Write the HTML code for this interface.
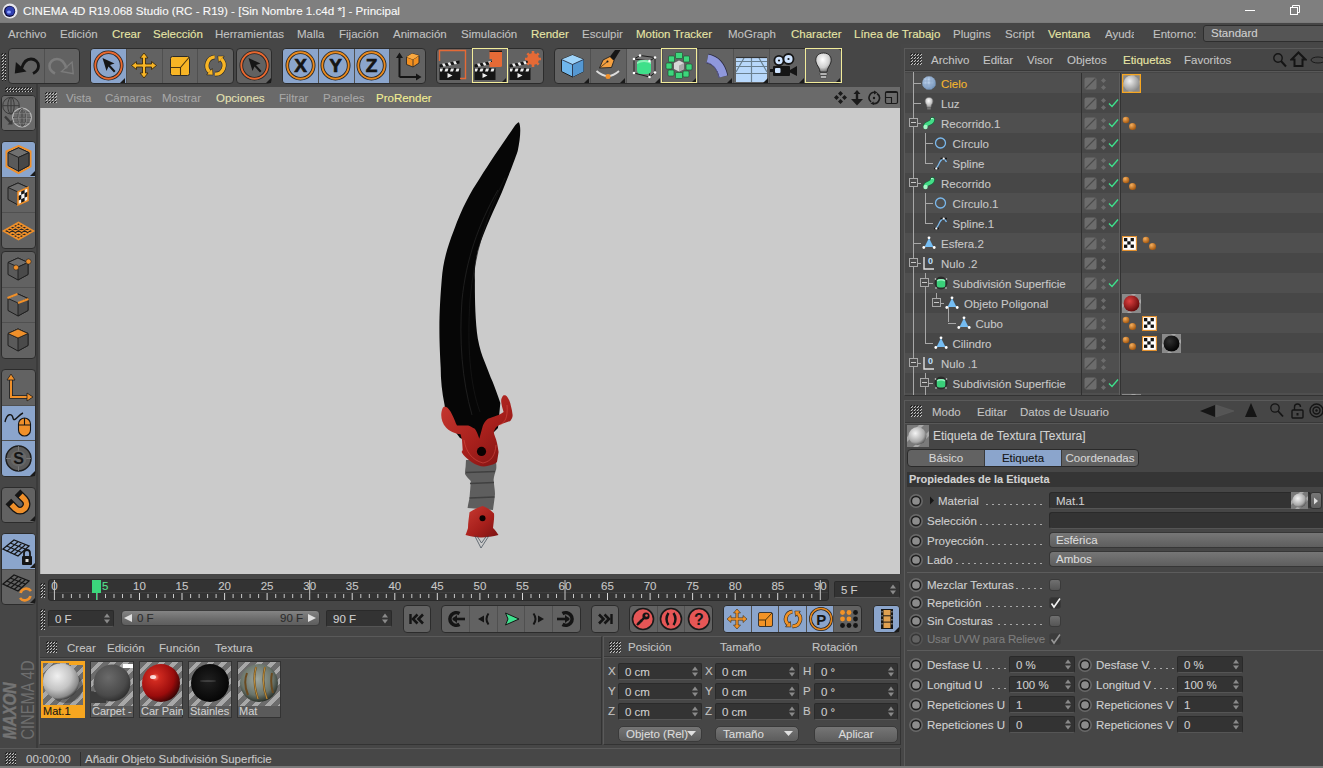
<!DOCTYPE html><html><head><meta charset="utf-8"><style>
*{margin:0;padding:0;box-sizing:border-box}
html,body{width:1323px;height:768px;overflow:hidden;background:#464646;font-family:"Liberation Sans",sans-serif;position:relative}
div,span,svg{position:absolute}
.t{white-space:nowrap;font-size:11.5px;color:#c2c2c2;line-height:14px;-webkit-text-stroke:0.1px currentColor}
.y{color:#e8e6a6}
</style></head><body><div style="left:0px;top:0px;width:1323px;height:23px;background:#7f7f7f"></div>
<div style="left:0px;top:22px;width:1323px;height:1px;background:#7a7a7a"></div>
<svg style="left:2px;top:3px" width="16" height="16" viewBox="0 0 16 16"><circle cx="8" cy="8" r="7.5" fill="#e8e8ee"/><circle cx="7.6" cy="8.3" r="5.6" fill="#101040"/><circle cx="8" cy="8" r="4.6" fill="#3140b0"/><ellipse cx="7" cy="9" rx="2" ry="1.6" fill="#8aa0ff"/></svg>
<span class="t" style="left:23px;top:4px;color:#fafafa;font-size:11.6px">CINEMA 4D R19.068 Studio (RC - R19) - [Sin Nombre 1.c4d *] - Principal</span>
<div style="left:1245px;top:10px;width:10px;height:1px;background:#fff"></div>
<svg style="left:1289px;top:4px" width="12" height="12" viewBox="0 0 12 12"><rect x="1.5" y="3.5" width="7" height="7" fill="none" stroke="#fff"/><path d="M3.5 3.5V1.5h7v7h-2" fill="none" stroke="#fff"/></svg>
<span class="t" style="left:8px;top:27px;">Archivo</span>
<span class="t" style="left:60px;top:27px;">Edición</span>
<span class="t" style="left:112px;top:27px;color:#e8e6a6">Crear</span>
<span class="t" style="left:153px;top:27px;color:#e8e6a6">Selección</span>
<span class="t" style="left:215px;top:27px;">Herramientas</span>
<span class="t" style="left:297px;top:27px;">Malla</span>
<span class="t" style="left:339px;top:27px;">Fijación</span>
<span class="t" style="left:393px;top:27px;">Animación</span>
<span class="t" style="left:461px;top:27px;">Simulación</span>
<span class="t" style="left:531px;top:27px;color:#e8e6a6">Render</span>
<span class="t" style="left:582px;top:27px;">Esculpir</span>
<span class="t" style="left:636px;top:27px;color:#e8e6a6">Motion Tracker</span>
<span class="t" style="left:728px;top:27px;">MoGraph</span>
<span class="t" style="left:791px;top:27px;color:#e8e6a6">Character</span>
<span class="t" style="left:854px;top:27px;color:#e8e6a6">Línea de Trabajo</span>
<span class="t" style="left:953px;top:27px;">Plugins</span>
<span class="t" style="left:1005px;top:27px;">Script</span>
<span class="t" style="left:1048px;top:27px;color:#e8e6a6">Ventana</span>
<span class="t" style="left:1105px;top:27px;"><span style='display:inline-block;position:static;width:29px;overflow:hidden;vertical-align:top'>Ayuda</span></span>
<span class="t" style="left:1153px;top:27px;">Entorno:</span>
<div style="left:1203px;top:25px;width:130px;height:17px;background:#555;border:1px solid #2e2e2e;border-radius:3px"></div>
<span class="t" style="left:1211px;top:26px;color:#d0d0d0">Standard</span>
<svg style="left:1px;top:53px" width="5" height="28"><defs><pattern id="gp1" width="3" height="3" patternUnits="userSpaceOnUse"><rect x="0" y="1" width="1" height="1" fill="#1e1e1e"/><rect x="1" y="0" width="1" height="1" fill="#1e1e1e"/><rect x="1" y="2" width="1" height="1" fill="#c4c4c4"/><rect x="2" y="1" width="1" height="1" fill="#c4c4c4"/></pattern></defs><rect width="5" height="28" fill="url(#gp1)"/></svg>
<div style="left:8px;top:48px;width:72px;height:36px;background:#626262;border:1px solid #2c2c2c;border-radius:4px;overflow:hidden">
<div style="left:34.5px;top:0;width:1px;height:34px;background:#505050"></div>
</div>
<svg style="left:9px;top:48px" width="35" height="35" viewBox="0 0 35 35"><path d="M12.5 20.5 C14.5 14 18 11 22 11 C26 11 29.5 14 29.5 18 C29.5 21.5 27 24 24 25.5" fill="none" stroke="#151515" stroke-width="2.8"/><path d="M5.8 25.6 L6.9 14 L17.5 23.5Z" fill="#151515"/></svg>
<svg style="left:44px;top:48px" width="35" height="35" viewBox="0 0 35 35"><path d="M22.5 20.5 C20.5 14 17 11 13 11 C9 11 5.5 14 5.5 18 C5.5 21.5 8 24 11 25.5" fill="none" stroke="#7c7c7c" stroke-width="2.6"/><path d="M29.2 25.6 L28.1 14 L17.5 23.5Z" fill="none" stroke="#7c7c7c" stroke-width="1.3"/></svg>
<div style="left:90px;top:48px;width:144px;height:36px;background:#626262;border:1px solid #2c2c2c;border-radius:4px;overflow:hidden">
<div style="left:0.0px;top:0;width:35.5px;height:34px;background:#8ba5cc"></div>
<div style="left:35.0px;top:0;width:1px;height:34px;background:#505050"></div>
<div style="left:70.5px;top:0;width:1px;height:34px;background:#505050"></div>
<div style="left:106.0px;top:0;width:1px;height:34px;background:#505050"></div>
</div>
<svg style="left:91px;top:48px" width="35" height="35" viewBox="0 0 35 35"><circle cx="17.5" cy="17.5" r="13.2" fill="none" stroke="#222" stroke-width="3.6"/><circle cx="17.5" cy="17.5" r="13.2" fill="none" stroke="#e9682f" stroke-width="1.9"/><path d="M11.5 10 L23.5 15.5 L19 17 L24.5 23 L23 24.5 L17.5 18.5 L15.5 23Z" fill="#151515"/></svg>
<svg style="left:120px;top:78px" width="5" height="5"><path d="M5 0V5H0Z" fill="#1a1a1a"/></svg>
<svg style="left:126px;top:48px" width="36" height="35" viewBox="0 0 36 35"><path d="M18 5 L22 10 H19.5 V16 H25.5 V13.5 L30.5 17.5 L25.5 21.5 V19 H19.5 V25 H22 L18 30 L14 25 H16.5 V19 H10.5 V21.5 L5.5 17.5 L10.5 13.5 V16 H16.5 V10 H14Z" fill="#f8b525" stroke="#3a2a10" stroke-width=".9"/></svg>
<svg style="left:162px;top:48px" width="36" height="35" viewBox="0 0 36 35"><rect x="8.5" y="8.5" width="19" height="19" rx="2" fill="#f8b525" stroke="#2a2a2a" stroke-width="1"/><path d="M9 19.5 H18.5 V27.5 M18.5 19.5 L27 9.5" fill="none" stroke="#4a3510" stroke-width="1.1"/></svg>
<svg style="left:198px;top:48px" width="35" height="35" viewBox="0 0 35 35"><path d="M16.75 8.93 A8.6 8.6 0 0 0 11.63 23.79" fill="none" stroke="#2a2a2a" stroke-width="4.6"/><path d="M14.71 26.65 L9.04 26.57 L14.23 21.01Z" fill="#2a2a2a" stroke="#2a2a2a" stroke-width="1.2" stroke-linejoin="round"/><path d="M16.90 26.08 A8.6 8.6 0 0 0 23.25 11.11" fill="none" stroke="#2a2a2a" stroke-width="4.6"/><path d="M20.13 8.30 L25.80 8.29 L20.71 13.93Z" fill="#2a2a2a" stroke="#2a2a2a" stroke-width="1.2" stroke-linejoin="round"/><path d="M16.75 8.93 A8.6 8.6 0 0 0 11.63 23.79" fill="none" stroke="#f8b525" stroke-width="3.4"/><path d="M14.71 26.65 L9.04 26.57 L14.23 21.01Z" fill="#f8b525"/><path d="M16.90 26.08 A8.6 8.6 0 0 0 23.25 11.11" fill="none" stroke="#f8b525" stroke-width="3.4"/><path d="M20.13 8.30 L25.80 8.29 L20.71 13.93Z" fill="#f8b525"/></svg>
<div style="left:236px;top:48px;width:36px;height:36px;background:#626262;border:1px solid #2c2c2c;border-radius:4px;overflow:hidden">
</div>
<svg style="left:237px;top:48px" width="35" height="35" viewBox="0 0 35 35"><circle cx="17.5" cy="17.5" r="13.2" fill="none" stroke="#222" stroke-width="3.6"/><circle cx="17.5" cy="17.5" r="13.2" fill="none" stroke="#e9682f" stroke-width="1.9"/><path d="M11.5 10 L23.5 15.5 L19 17 L24.5 23 L23 24.5 L17.5 18.5 L15.5 23Z" fill="#151515"/></svg>
<svg style="left:266px;top:78px" width="5" height="5"><path d="M5 0V5H0Z" fill="#1a1a1a"/></svg>
<div style="left:282px;top:48px;width:144px;height:36px;background:#626262;border:1px solid #2c2c2c;border-radius:4px;overflow:hidden">
<div style="left:0.0px;top:0;width:35.5px;height:34px;background:#8ba5cc"></div>
<div style="left:35.5px;top:0;width:35.5px;height:34px;background:#8ba5cc"></div>
<div style="left:35.0px;top:0;width:1px;height:34px;background:#505050"></div>
<div style="left:71.0px;top:0;width:35.5px;height:34px;background:#8ba5cc"></div>
<div style="left:70.5px;top:0;width:1px;height:34px;background:#505050"></div>
<div style="left:106.0px;top:0;width:1px;height:34px;background:#505050"></div>
</div>
<svg style="left:283px;top:48px" width="35" height="35" viewBox="0 0 35 35"><circle cx="17.5" cy="17.5" r="13.2" fill="none" stroke="#222" stroke-width="3.6"/><circle cx="17.5" cy="17.5" r="13.2" fill="none" stroke="#e8891e" stroke-width="1.9"/><text x="17.6" y="24" text-anchor="middle" font-family="Liberation Sans" font-weight="bold" font-size="19" fill="#151515" stroke="#151515" stroke-width=".7">X</text></svg>
<svg style="left:318px;top:48px" width="36" height="35" viewBox="0 0 36 35"><circle cx="17.5" cy="17.5" r="13.2" fill="none" stroke="#222" stroke-width="3.6"/><circle cx="17.5" cy="17.5" r="13.2" fill="none" stroke="#e8891e" stroke-width="1.9"/><text x="17.6" y="24" text-anchor="middle" font-family="Liberation Sans" font-weight="bold" font-size="19" fill="#151515" stroke="#151515" stroke-width=".7">Y</text></svg>
<svg style="left:354px;top:48px" width="36" height="35" viewBox="0 0 36 35"><circle cx="17.5" cy="17.5" r="13.2" fill="none" stroke="#222" stroke-width="3.6"/><circle cx="17.5" cy="17.5" r="13.2" fill="none" stroke="#e8891e" stroke-width="1.9"/><text x="17.6" y="24" text-anchor="middle" font-family="Liberation Sans" font-weight="bold" font-size="19" fill="#151515" stroke="#151515" stroke-width=".7">Z</text></svg>
<svg style="left:390px;top:48px" width="35" height="35" viewBox="0 0 35 35"><path d="M9.5 29 V7 M9.5 29 H29" stroke="#151515" stroke-width="2" fill="none"/><path d="M6 10 L9.5 4.5 L13 10Z M26 25.5 L31.5 29 L26 32.5Z" fill="#151515"/><path d="M16.5 9 L22 5.5 L29 7.5 V15 L23 19 L16.5 16.5Z" fill="#f39020" stroke="#2a2a2a" stroke-width=".9"/><path d="M16.5 9 L23 11.5 L29 7.5 M23 11.5 V19" fill="none" stroke="#2a2a2a" stroke-width=".8"/><path d="M16.5 9 L22 5.5 L29 7.5 L23 11.5Z" fill="#f9a840"/></svg>
<div style="left:436px;top:48px;width:108px;height:36px;background:#626262;border:1px solid #2c2c2c;border-radius:4px;overflow:hidden">
<div style="left:34.8px;top:0;width:1px;height:34px;background:#505050"></div>
<div style="left:70.2px;top:0;width:1px;height:34px;background:#505050"></div>
</div>
<svg style="left:437px;top:48px" width="35" height="35" viewBox="0 0 35 35"><g transform="translate(0.5,2)"><path d="M2 18 H23 V30 H2Z" fill="#151515"/><path d="M2 14.5 L22 10.5 V13.5 L2 17.5Z" fill="#151515"/><path d="M4.5 13.8 L7 13.3 L8.5 16.3 L6 16.8Z M10 12.7 L12.5 12.2 L14 15.2 L11.5 15.7Z M15.5 11.6 L18 11.1 L19.5 14.1 L17 14.6Z M2.5 18.5 H5.5 L4.5 21.5 H2.5Z M8 18.5 H11 L10 21.5 H7Z M13.5 18.5 H16.5 L15.5 21.5 H12.5Z M19 18.5 H22 L21 21.5 H18Z" fill="#eee"/><path d="M10 23 L15 25.5 L10 28Z" fill="#eee"/></g><path d="M2.5 13 V2.5 H28.5 V30.5 H23" fill="none" stroke="#e56a36" stroke-width="1.4"/></svg>
<svg style="left:472px;top:48px" width="35" height="35" viewBox="0 0 35 35"><g transform="translate(0.5,2)"><path d="M2 18 H23 V30 H2Z" fill="#151515"/><path d="M2 14.5 L22 10.5 V13.5 L2 17.5Z" fill="#151515"/><path d="M4.5 13.8 L7 13.3 L8.5 16.3 L6 16.8Z M10 12.7 L12.5 12.2 L14 15.2 L11.5 15.7Z M15.5 11.6 L18 11.1 L19.5 14.1 L17 14.6Z M2.5 18.5 H5.5 L4.5 21.5 H2.5Z M8 18.5 H11 L10 21.5 H7Z M13.5 18.5 H16.5 L15.5 21.5 H12.5Z M19 18.5 H22 L21 21.5 H18Z" fill="#eee"/><path d="M10 23 L15 25.5 L10 28Z" fill="#eee"/></g><path d="M17.5 2.5 H30 V18 Q30 19 28 19 H17.5 V14 H20 V11 H17.5Z" fill="#e56a36"/><path d="M17.5 2.5 H30 V4 H17.5Z" fill="#151515"/></svg>
<svg style="left:501px;top:78px" width="5" height="5"><path d="M5 0V5H0Z" fill="#1a1a1a"/></svg>
<div style="left:472px;top:48px;width:36px;height:35px;border:1px solid #f2ec9a"></div>
<svg style="left:507px;top:48px" width="35" height="35" viewBox="0 0 35 35"><g transform="translate(0.5,2)"><path d="M2 18 H23 V30 H2Z" fill="#151515"/><path d="M2 14.5 L22 10.5 V13.5 L2 17.5Z" fill="#151515"/><path d="M4.5 13.8 L7 13.3 L8.5 16.3 L6 16.8Z M10 12.7 L12.5 12.2 L14 15.2 L11.5 15.7Z M15.5 11.6 L18 11.1 L19.5 14.1 L17 14.6Z M2.5 18.5 H5.5 L4.5 21.5 H2.5Z M8 18.5 H11 L10 21.5 H7Z M13.5 18.5 H16.5 L15.5 21.5 H12.5Z M19 18.5 H22 L21 21.5 H18Z" fill="#eee"/><path d="M10 23 L15 25.5 L10 28Z" fill="#eee"/></g><circle cx="26" cy="11" r="6" fill="#e56a36"/><circle cx="26" cy="11" r="2.6" fill="#555"/><path d="M26 3 V19 M18 11 H34 M20.3 5.3 L31.7 16.7 M31.7 5.3 L20.3 16.7" stroke="#e56a36" stroke-width="2.6"/></svg>
<div style="left:554px;top:48px;width:288px;height:36px;background:#626262;border:1px solid #2c2c2c;border-radius:4px;overflow:hidden">
<div style="left:35.2px;top:0;width:1px;height:34px;background:#505050"></div>
<div style="left:71.5px;top:0;width:35.8px;height:34px;background:#727272"></div>
<div style="left:71.0px;top:0;width:1px;height:34px;background:#505050"></div>
<div style="left:106.8px;top:0;width:1px;height:34px;background:#505050"></div>
<div style="left:142.5px;top:0;width:1px;height:34px;background:#505050"></div>
<div style="left:178.2px;top:0;width:1px;height:34px;background:#505050"></div>
<div style="left:214.0px;top:0;width:1px;height:34px;background:#505050"></div>
<div style="left:249.8px;top:0;width:1px;height:34px;background:#505050"></div>
</div>
<svg style="left:555px;top:48px" width="35" height="35" viewBox="0 0 35 35"><path d="M17.5 7 L28.5 11.5 V23.5 L17.5 29 L6.5 23.5 V11.5Z" fill="#6fb6ec" stroke="#222" stroke-width="1"/><path d="M6.5 11.5 L17.5 16.5 L28.5 11.5 L17.5 7Z" fill="#9fd4fa"/><path d="M17.5 16.5 V29 L28.5 23.5 V11.5Z" fill="#5598d2"/><path d="M6.5 11.5 L17.5 16.5 L28.5 11.5 M17.5 16.5 V29" fill="none" stroke="#223" stroke-width=".8"/></svg>
<svg style="left:584px;top:78px" width="5" height="5"><path d="M5 0V5H0Z" fill="#1a1a1a"/></svg>
<svg style="left:590px;top:48px" width="36" height="35" viewBox="0 0 36 35"><path d="M6.5 23 Q18 33 29 23" fill="none" stroke="#ddd" stroke-width="1.8"/><circle cx="18" cy="28.5" r="2.5" fill="#f0902a"/><path d="M9.5 20 L13 12 L20 8.5 L24 12.5 L21.5 19.5Z" fill="#f5a040" stroke="#222" stroke-width=".9"/><path d="M20 8.5 L25 2 H30.5 L24 12.5Z" fill="#151515"/><circle cx="17.5" cy="13.5" r="1" fill="#151515"/><path d="M9.5 20 L17.5 13.5" stroke="#222" stroke-width=".7"/></svg>
<svg style="left:620px;top:78px" width="5" height="5"><path d="M5 0V5H0Z" fill="#1a1a1a"/></svg>
<svg style="left:626px;top:48px" width="35" height="35" viewBox="0 0 35 35"><path d="M8 11 L14 7.5 L29 9.5 L29 24.5 L23.5 29 L8 25Z" fill="none" stroke="#1c1c1c" stroke-width="1"/><path d="M8 11 L23.5 13 L29 9.5 M23.5 13 V29" fill="none" stroke="#1c1c1c" stroke-width="1"/><rect x="11" y="12" width="14" height="14" rx="4" fill="#3fe08a"/><path d="M11 16 Q18 12 25 16 V14 Q18 10 11 14Z" fill="#8ef0b8"/><g fill="#fff"><circle cx="8" cy="11" r="1.3"/><circle cx="14" cy="7.5" r="1.3"/><circle cx="29" cy="9.5" r="1.3"/><circle cx="23.5" cy="13" r="1.3"/><circle cx="29" cy="24.5" r="1.3"/><circle cx="23.5" cy="29" r="1.3"/><circle cx="8" cy="25" r="1.3"/></g></svg>
<svg style="left:655px;top:78px" width="5" height="5"><path d="M5 0V5H0Z" fill="#1a1a1a"/></svg>
<svg style="left:661px;top:48px" width="36" height="35" viewBox="0 0 36 35"><g fill="#3dd67c" stroke="#1a4a2a" stroke-width=".6"><rect x="14.5" y="4.5" width="7" height="6" rx="1"/><rect x="22.5" y="8" width="6" height="6" rx="1"/><rect x="25" y="16" width="6" height="6" rx="1"/><rect x="22" y="23" width="6" height="6" rx="1"/><rect x="14.5" y="24.5" width="7" height="6" rx="1"/><rect x="7" y="22" width="6" height="6" rx="1"/><rect x="5" y="15" width="6" height="6" rx="1"/><rect x="7.5" y="8" width="6" height="6" rx="1"/></g><path d="M13 15 L18 12.5 L23 15 V21 L18 23.5 L13 21Z" fill="#d8d8d8"/><path d="M18 17.5 V23.5 L23 21 V15Z" fill="#aaa"/></svg>
<svg style="left:691px;top:78px" width="5" height="5"><path d="M5 0V5H0Z" fill="#1a1a1a"/></svg>
<div style="left:661px;top:48px;width:36px;height:35px;border:1px solid #f2ec9a"></div>
<svg style="left:697px;top:48px" width="36" height="35" viewBox="0 0 36 35"><path d="M10.5 10.5 Q23 13 26.5 28.5" fill="none" stroke="#2a2a40" stroke-width="9.5"/><path d="M10.5 10.5 Q23 13 26.5 28.5" fill="none" stroke="#8f98dc" stroke-width="8"/><path d="M8.5 14 Q19.5 16 22 30" fill="none" stroke="#5a5a90" stroke-width=".9"/></svg>
<svg style="left:727px;top:78px" width="5" height="5"><path d="M5 0V5H0Z" fill="#1a1a1a"/></svg>
<svg style="left:733px;top:48px" width="36" height="35" viewBox="0 0 36 35"><rect x="3" y="10" width="31" height="24" fill="#b8d8fb"/><path d="M3 13.5 H34 M3 18.5 H34 M3 25.5 H34 M18.5 10 V34 M11 10 L3 24 M26 10 L34 24" stroke="#6a8090" stroke-width="1.2"/><path d="M3 9.5 H34" stroke="#333" stroke-width="1.2"/></svg>
<svg style="left:763px;top:78px" width="5" height="5"><path d="M5 0V5H0Z" fill="#1a1a1a"/></svg>
<svg style="left:769px;top:48px" width="36" height="35" viewBox="0 0 36 35"><circle cx="10" cy="12.5" r="4.6" fill="#cfe4ff" stroke="#151515" stroke-width="1.8"/><circle cx="10" cy="12.5" r="1.1" fill="#151515"/><circle cx="19.5" cy="11" r="5" fill="#cfe4ff" stroke="#151515" stroke-width="1.8"/><circle cx="19.5" cy="11" r="1.1" fill="#151515"/><rect x="4" y="18" width="17" height="10" rx="1" fill="#151515"/><rect x="1" y="21" width="3" height="3" fill="#151515"/><rect x="6" y="20" width="5.5" height="5" rx="1" fill="#cfe4ff"/><path d="M21 22 L28 18 V28 L21 24.5Z" fill="#151515"/></svg>
<svg style="left:799px;top:78px" width="5" height="5"><path d="M5 0V5H0Z" fill="#1a1a1a"/></svg>
<svg style="left:805px;top:48px" width="36" height="35" viewBox="0 0 36 35"><defs><radialGradient id="bulb" cx=".45" cy=".35" r=".6"><stop offset="0" stop-color="#fff"/><stop offset=".7" stop-color="#cfcfcf"/><stop offset="1" stop-color="#888"/></radialGradient></defs><path d="M18.5 5 C24.5 5 27 9.5 26 14 C25 18 22 20 22 24 H15 C15 20 12 18 11 14 C10 9.5 12.5 5 18.5 5Z" fill="url(#bulb)" stroke="#222" stroke-width=".9"/><path d="M15 25 H22 V27 H15Z M15.5 28 H21.5 V30 H15.5Z" fill="#ddd" stroke="#333" stroke-width=".5"/></svg>
<svg style="left:835px;top:78px" width="5" height="5"><path d="M5 0V5H0Z" fill="#1a1a1a"/></svg>
<div style="left:805px;top:48px;width:37px;height:35px;border:1px solid #f2ec9a"></div>
<div style="left:36px;top:84px;width:2px;height:664px;background:#3b3b3b"></div>
<svg style="left:5px;top:87px" width="28" height="5"><defs><pattern id="gp2" width="3" height="3" patternUnits="userSpaceOnUse"><rect x="0" y="1" width="1" height="1" fill="#1e1e1e"/><rect x="1" y="0" width="1" height="1" fill="#1e1e1e"/><rect x="1" y="2" width="1" height="1" fill="#c4c4c4"/><rect x="2" y="1" width="1" height="1" fill="#c4c4c4"/></pattern></defs><rect width="28" height="5" fill="url(#gp2)"/></svg>
<div style="left:1px;top:95px;width:35px;height:36px;background:#626262;border:1px solid #2c2c2c;border-radius:4px;overflow:hidden">
</div>
<div style="left:2px;top:96px;width:33px;height:34px;background:#6a6a6a;border-radius:3px"></div>
<svg style="left:2px;top:96px" width="33" height="34" viewBox="0 0 33 34"><g fill="none" stroke="#3a3a3a" stroke-width="1"><circle cx="9" cy="9.7" r="8.3"/><path d="M9 1.5 V18 M1 9.7 H17"/><ellipse cx="9" cy="9.7" rx="3.2" ry="8.3"/></g><circle cx="20" cy="21.5" r="9.4" fill="#6a6a6a" stroke="#b8b8b8" stroke-width="1.2"/><g fill="none" stroke="#3e3e3e" stroke-width=".9"><ellipse cx="20" cy="21.5" rx="4" ry="9"/><path d="M11 21.5 H29 M12.5 16.5 H27.5 M12.5 26.5 H27.5 M20 12.5 V30.5"/></g><g fill="none" stroke="#9a9a9a" stroke-width=".6"><ellipse cx="20.6" cy="22" rx="4" ry="9"/><path d="M11.6 22 H29.6 M13 17 H28 M13 27 H28"/></g><path d="M3 20.5 L8.5 26.5" stroke="#3a3a3a" stroke-width="2.4"/><path d="M5.5 28.5 H10.5 V23.5Z" fill="#3a3a3a"/></svg>
<div style="left:1px;top:141px;width:35px;height:108px;background:#626262;border:1px solid #2c2c2c;border-radius:4px;overflow:hidden">
<div style="left:0;top:0.0px;width:33px;height:35.3px;background:#8ba5cc"></div>
<div style="left:0;top:34.8px;width:33px;height:1px;background:#505050"></div>
<div style="left:0;top:70.2px;width:33px;height:1px;background:#505050"></div>
</div>
<svg style="left:1px;top:142px" width="35" height="35" viewBox="0 0 35 35"><path d="M17.5 4 L29.5 9.5 V24.5 L17.5 31 L5.5 24.5 V9.5Z" fill="none" stroke="#f0902a" stroke-width="2"/><path d="M17.5 5.8 L28 10.6 V23.6 L17.5 29.2 L7 23.6 V10.6Z" fill="#5a5a5a" stroke="#1e1e1e" stroke-width="1"/><path d="M7 10.6 L17.5 15.4 L28 10.6 L17.5 5.8Z" fill="#707070" stroke="#1e1e1e" stroke-width=".9"/><path d="M17.5 15.4 V29.2 L28 23.6 V10.6Z" fill="#474747" stroke="#1e1e1e" stroke-width=".9"/></svg>
<svg style="left:30px;top:171px" width="5" height="5"><path d="M5 0V5H0Z" fill="#1a1a1a"/></svg>
<svg style="left:1px;top:177px" width="35" height="36" viewBox="0 0 35 36"><path d="M17 6 L27 10.5 V22.5 L17 28 L7 22.5 V10.5Z" fill="#5a5a5a" stroke="#1e1e1e" stroke-width="1"/><path d="M7 10.5 L17 15 L27 10.5 L17 6Z" fill="#6e6e6e" stroke="#1e1e1e" stroke-width=".9"/><path d="M17 15 V28 L27 22.5 V10.5Z" fill="#4a4a4a" stroke="#1e1e1e" stroke-width=".9"/><path d="M17.00 15.00 L20.33 13.50 L20.33 17.83 L17.00 19.33Z" fill="#f4f4f4"/><path d="M17.00 19.33 L20.33 17.83 L20.33 22.17 L17.00 23.67Z" fill="#151515"/><path d="M17.00 23.67 L20.33 22.17 L20.33 26.50 L17.00 28.00Z" fill="#f4f4f4"/><path d="M20.33 13.50 L23.67 12.00 L23.67 16.33 L20.33 17.83Z" fill="#151515"/><path d="M20.33 17.83 L23.67 16.33 L23.67 20.67 L20.33 22.17Z" fill="#f4f4f4"/><path d="M20.33 22.17 L23.67 20.67 L23.67 25.00 L20.33 26.50Z" fill="#151515"/><path d="M23.67 12.00 L27.00 10.50 L27.00 14.83 L23.67 16.33Z" fill="#f4f4f4"/><path d="M23.67 16.33 L27.00 14.83 L27.00 19.17 L23.67 20.67Z" fill="#151515"/><path d="M23.67 20.67 L27.00 19.17 L27.00 23.50 L23.67 25.00Z" fill="#f4f4f4"/><path d="M17 15 L27 10.5 V23.5 L17 28Z" fill="none" stroke="#f0902a" stroke-width="1.6"/></svg>
<svg style="left:1px;top:213px" width="35" height="36" viewBox="0 0 35 36"><path d="M2.5 18 L17.5 9.5 L32.5 18 L17.5 26.5Z" fill="#262626" stroke="#f0902a" stroke-width="1.6"/><path d="M5.50 16.30 L20.50 24.80 M5.50 19.70 L20.50 11.20 M8.50 14.60 L23.50 23.10 M8.50 21.40 L23.50 12.90 M11.50 12.90 L26.50 21.40 M11.50 23.10 L26.50 14.60 M14.50 11.20 L29.50 19.70 M14.50 24.80 L29.50 16.30" stroke="#f0902a" stroke-width="1.5"/></svg>
<div style="left:1px;top:251px;width:35px;height:108px;background:#626262;border:1px solid #2c2c2c;border-radius:4px;overflow:hidden">
<div style="left:0;top:34.8px;width:33px;height:1px;background:#505050"></div>
<div style="left:0;top:70.2px;width:33px;height:1px;background:#505050"></div>
</div>
<svg style="left:1px;top:252px" width="35" height="35" viewBox="0 0 35 35"><path d="M17 6 L27 10.5 V22.5 L17 28 L7 22.5 V10.5Z" fill="#5a5a5a" stroke="#1e1e1e" stroke-width="1"/><path d="M7 10.5 L17 15 L27 10.5 L17 6Z" fill="#6e6e6e" stroke="#1e1e1e" stroke-width=".9"/><path d="M17 15 V28 L27 22.5 V10.5Z" fill="#4a4a4a" stroke="#1e1e1e" stroke-width=".9"/><circle cx="15" cy="15.5" r="2.6" fill="#f0902a" stroke="#222" stroke-width=".6"/><circle cx="27.5" cy="9.5" r="2.6" fill="#f0902a" stroke="#222" stroke-width=".6"/></svg>
<svg style="left:1px;top:288px" width="35" height="35" viewBox="0 0 35 35"><path d="M17 6 L27 10.5 V22.5 L17 28 L7 22.5 V10.5Z" fill="#5a5a5a" stroke="#1e1e1e" stroke-width="1"/><path d="M7 10.5 L17 15 L27 10.5 L17 6Z" fill="#6e6e6e" stroke="#1e1e1e" stroke-width=".9"/><path d="M17 15 V28 L27 22.5 V10.5Z" fill="#4a4a4a" stroke="#1e1e1e" stroke-width=".9"/><path d="M6.5 10 L16.5 6 M17 15 L27.5 11" stroke="#f0902a" stroke-width="2"/></svg>
<svg style="left:1px;top:323px" width="35" height="35" viewBox="0 0 35 35"><path d="M17 6 L27 10.5 V22.5 L17 28 L7 22.5 V10.5Z" fill="#5a5a5a" stroke="#1e1e1e" stroke-width="1"/><path d="M7 10.5 L17 15 L27 10.5 L17 6Z" fill="#6e6e6e" stroke="#1e1e1e" stroke-width=".9"/><path d="M17 15 V28 L27 22.5 V10.5Z" fill="#4a4a4a" stroke="#1e1e1e" stroke-width=".9"/><path d="M7 10.5 L17 15 L27 10.5 L17 6Z" fill="#f0902a" stroke="#222" stroke-width=".8"/></svg>
<div style="left:1px;top:369px;width:35px;height:108px;background:#626262;border:1px solid #2c2c2c;border-radius:4px;overflow:hidden">
<div style="left:0;top:35.3px;width:33px;height:35.3px;background:#8ba5cc"></div>
<div style="left:0;top:34.8px;width:33px;height:1px;background:#505050"></div>
<div style="left:0;top:70.7px;width:33px;height:35.3px;background:#8ba5cc"></div>
<div style="left:0;top:70.2px;width:33px;height:1px;background:#505050"></div>
</div>
<svg style="left:1px;top:370px" width="35" height="35" viewBox="0 0 35 35"><path d="M10 6 V27 H30" fill="none" stroke="#1e1e1e" stroke-width="3.6"/><path d="M10 6 V27 H30" fill="none" stroke="#f0902a" stroke-width="2"/><path d="M6 10 L10 4 L14 10Z M26 23 L32 27 L26 31Z" fill="#f0902a" stroke="#1e1e1e" stroke-width=".8"/></svg>
<svg style="left:1px;top:405px" width="35" height="36" viewBox="0 0 35 36"><path d="M4 17 C6 8 11 8 12 13 C13 18 17 10 22 8" fill="none" stroke="#151515" stroke-width="1.4"/><rect x="17.5" y="13" width="12" height="18" rx="6" fill="#f0902a" stroke="#151515" stroke-width="1.1"/><path d="M17.5 20 H29.5 M23.5 13 V20" stroke="#151515" stroke-width="1.1"/></svg>
<svg style="left:1px;top:441px" width="35" height="36" viewBox="0 0 35 36"><circle cx="17.5" cy="17.5" r="12.5" fill="#5a5a5a" stroke="#1e1e1e" stroke-width="1.5"/><path d="M17.5 5 V30 M5 17.5 H30" stroke="#808080" stroke-width=".8"/><circle cx="17.5" cy="17.5" r="8" fill="#666"/><text x="17.6" y="23" text-anchor="middle" font-family="Liberation Sans" font-weight="bold" font-size="16" fill="#151515">S</text></svg>
<svg style="left:30px;top:471px" width="5" height="5"><path d="M5 0V5H0Z" fill="#1a1a1a"/></svg>
<div style="left:1px;top:487px;width:35px;height:36px;background:#626262;border:1px solid #2c2c2c;border-radius:4px;overflow:hidden">
</div>
<svg style="left:1px;top:487px" width="35" height="36" viewBox="0 0 35 36"><g transform="translate(19,17) rotate(-45)"><path d="M-6.5 -10 V0 A6.5 6.5 0 0 0 6.5 0 V-10" fill="none" stroke="#151515" stroke-width="8"/><path d="M-6.5 -5.5 V0 A6.5 6.5 0 0 0 6.5 0 V-5.5" fill="none" stroke="#f0902a" stroke-width="5.4"/></g></svg>
<svg style="left:30px;top:516px" width="5" height="5"><path d="M5 0V5H0Z" fill="#1a1a1a"/></svg>
<div style="left:1px;top:533px;width:35px;height:72px;background:#626262;border:1px solid #2c2c2c;border-radius:4px;overflow:hidden">
<div style="left:0;top:0.0px;width:33px;height:35.0px;background:#8ba5cc"></div>
<div style="left:0;top:34.5px;width:33px;height:1px;background:#505050"></div>
</div>
<svg style="left:1px;top:534px" width="35" height="35" viewBox="0 0 35 35"><path d="M2 15 L13 6 L28 12 L17 22Z" fill="none" stroke="#151515" stroke-width="1.3"/><path d="M5.7 12 L20.7 18.5 M9.3 9 L24.3 15 M5.7 17.3 L16.7 8 M9.4 19 L20.3 10 M13.1 20.5 L24.1 11" stroke="#151515" stroke-width="1.1"/><rect x="21" y="22" width="10" height="9" rx="1" fill="#151515"/><path d="M23 22 V19 A3 3 0 0 1 29 19 V22" fill="none" stroke="#151515" stroke-width="1.8"/><rect x="24.5" y="25" width="3" height="3" fill="#ddd"/></svg>
<svg style="left:30px;top:563px" width="5" height="5"><path d="M5 0V5H0Z" fill="#1a1a1a"/></svg>
<svg style="left:1px;top:569px" width="35" height="35" viewBox="0 0 35 35"><path d="M2 15 L13 6 L28 12 L17 22Z" fill="none" stroke="#151515" stroke-width="1.3"/><path d="M5.7 12 L20.7 18.5 M9.3 9 L24.3 15 M5.7 17.3 L16.7 8 M9.4 19 L20.3 10 M13.1 20.5 L24.1 11" stroke="#151515" stroke-width="1.1"/><path d="M19.5 24 A6 6 0 0 1 30 22" fill="none" stroke="#f0902a" stroke-width="2.6"/><path d="M29.5 27 A6 6 0 0 1 19 29" fill="none" stroke="#f0902a" stroke-width="2.6"/></svg>
<svg style="left:30px;top:598px" width="5" height="5"><path d="M5 0V5H0Z" fill="#1a1a1a"/></svg>
<div style="left:-30px;top:701px;width:80px;height:20px;transform:rotate(-90deg) scaleX(.86);font:italic bold 18px/20px 'Liberation Sans';color:#747474;letter-spacing:-0.3px;text-align:center;-webkit-text-stroke:.4px #747474">MAXON</div>
<div style="left:-32px;top:690px;width:120px;height:20px;transform:rotate(-90deg) scaleX(.84);font:17.5px/20px 'Liberation Sans';color:#6e6e6e;text-align:center">CINEMA 4D</div>
<div style="left:40px;top:87px;width:861px;height:21px;background:#6a6a6a"></div>
<svg style="left:45px;top:92px" width="12" height="11"><defs><pattern id="gp3" width="3" height="3" patternUnits="userSpaceOnUse"><rect x="0" y="1" width="1" height="1" fill="#1e1e1e"/><rect x="1" y="0" width="1" height="1" fill="#1e1e1e"/><rect x="1" y="2" width="1" height="1" fill="#c4c4c4"/><rect x="2" y="1" width="1" height="1" fill="#c4c4c4"/></pattern></defs><rect width="12" height="11" fill="url(#gp3)"/></svg>
<span class="t" style="left:66px;top:91px;color:#a8a8a8">Vista</span>
<span class="t" style="left:105px;top:91px;color:#a8a8a8">Cámaras</span>
<span class="t" style="left:162px;top:91px;color:#a8a8a8">Mostrar</span>
<span class="t" style="left:216px;top:91px;color:#e4e2b4">Opciones</span>
<span class="t" style="left:279px;top:91px;color:#a8a8a8">Filtrar</span>
<span class="t" style="left:323px;top:91px;color:#a8a8a8">Paneles</span>
<span class="t" style="left:376px;top:91px;color:#f2ee94">ProRender</span>
<svg style="left:833px;top:90px" width="15" height="15" viewBox="0 0 15 15"><path d="M7.5 1 L10 3.5 L7.5 6 L5 3.5Z M7.5 9 L10 11.5 L7.5 14 L5 11.5Z M1 7.5 L3.5 5 L6 7.5 L3.5 10Z M9 7.5 L11.5 5 L14 7.5 L11.5 10Z" fill="#1a1a1a"/></svg>
<svg style="left:850px;top:90px" width="14" height="16" viewBox="0 0 14 16"><path d="M7 0 L10.5 4 H8.2 V9 H13 L7 15.5 L1 9 H5.8 V4 H3.5Z" fill="#1a1a1a"/></svg>
<svg style="left:867px;top:90px" width="14" height="16" viewBox="0 0 14 16"><path d="M4 12 A5.5 5.5 0 0 1 8 2.3 M10 3.5 A5.5 5.5 0 0 1 6 13.5" fill="none" stroke="#1a1a1a" stroke-width="1.6"/><path d="M7 0.5 L10.5 2.5 L7 4.5Z M6.5 11.5 L3.5 13.5 L7 15Z" fill="#1a1a1a"/><circle cx="7" cy="8" r="1.2" fill="#1a1a1a"/></svg>
<svg style="left:884px;top:90px" width="15" height="15" viewBox="0 0 15 15"><rect x="1.5" y="1.5" width="12" height="12" rx="1.5" fill="none" stroke="#1a1a1a" stroke-width="1.2"/><path d="M1.5 2 H13.5 V3 H1.5Z" fill="#1a1a1a"/><path d="M1.5 7.5 H7.5 V13.5" fill="none" stroke="#1a1a1a" stroke-width="1.1"/></svg>
<div style="left:40px;top:108px;width:860px;height:466px;background:#cbcbcb"></div>
<div style="left:40px;top:108px;width:1px;height:466px;background:#b2b2b2"></div>
<div style="left:900px;top:87px;width:5px;height:487px;background:#3a3a3a"></div>
<div style="left:901px;top:44px;width:422px;height:724px;background:#474747"></div>
<div style="left:904px;top:48px;width:419px;height:348px;background:#464646;border:1px solid #5a5a5a;border-right:0;border-bottom-color:#333"></div>
<div style="left:905px;top:70px;width:418px;height:1px;background:#383838"></div>
<div style="left:905px;top:71px;width:418px;height:1px;background:#585858"></div>
<svg style="left:910px;top:53px" width="12" height="12"><defs><pattern id="gp4" width="3" height="3" patternUnits="userSpaceOnUse"><rect x="0" y="1" width="1" height="1" fill="#1e1e1e"/><rect x="1" y="0" width="1" height="1" fill="#1e1e1e"/><rect x="1" y="2" width="1" height="1" fill="#c4c4c4"/><rect x="2" y="1" width="1" height="1" fill="#c4c4c4"/></pattern></defs><rect width="12" height="12" fill="url(#gp4)"/></svg>
<span class="t" style="left:931px;top:53px;color:#c4c4c4">Archivo</span>
<span class="t" style="left:983px;top:53px;color:#c4c4c4">Editar</span>
<span class="t" style="left:1027px;top:53px;color:#c4c4c4">Visor</span>
<span class="t" style="left:1067px;top:53px;color:#c4c4c4">Objetos</span>
<span class="t" style="left:1123px;top:53px;color:#e8e6a6">Etiquetas</span>
<span class="t" style="left:1184px;top:53px;color:#c4c4c4">Favoritos</span>
<svg style="left:1272px;top:52px" width="16" height="16" viewBox="0 0 16 16"><circle cx="6" cy="6" r="4.2" fill="none" stroke="#151515" stroke-width="1.4"/><path d="M9 9 L14 14.5" stroke="#151515" stroke-width="2"/></svg>
<svg style="left:1290px;top:51px" width="17" height="17" viewBox="0 0 17 17"><path d="M8.5 1.5 L15.5 8.5 H12.5 V15 H4.5 V8.5 H1.5Z" fill="none" stroke="#151515" stroke-width="2" stroke-linejoin="miter"/></svg>
<svg style="left:1310px;top:55px" width="13" height="10" viewBox="0 0 13 10"><ellipse cx="8" cy="5" rx="7" ry="3" fill="none" stroke="#1a1a1a" stroke-width="1"/></svg>
<div style="left:905px;top:72px;width:418px;height:323px;overflow:hidden;background:#464646">
<div style="left:0;top:0.7px;width:418px;height:20px;background:#4f4f4f"></div>
<div style="left:0;top:20.7px;width:418px;height:20px;background:#474747"></div>
<div style="left:0;top:40.7px;width:418px;height:20px;background:#4f4f4f"></div>
<div style="left:0;top:60.7px;width:418px;height:20px;background:#474747"></div>
<div style="left:0;top:80.7px;width:418px;height:20px;background:#4f4f4f"></div>
<div style="left:0;top:100.7px;width:418px;height:20px;background:#474747"></div>
<div style="left:0;top:120.7px;width:418px;height:20px;background:#4f4f4f"></div>
<div style="left:0;top:140.7px;width:418px;height:20px;background:#474747"></div>
<div style="left:0;top:160.7px;width:418px;height:20px;background:#4f4f4f"></div>
<div style="left:0;top:180.7px;width:418px;height:20px;background:#474747"></div>
<div style="left:0;top:200.7px;width:418px;height:20px;background:#4f4f4f"></div>
<div style="left:0;top:220.7px;width:418px;height:20px;background:#474747"></div>
<div style="left:0;top:240.7px;width:418px;height:20px;background:#4f4f4f"></div>
<div style="left:0;top:260.7px;width:418px;height:20px;background:#474747"></div>
<div style="left:0;top:280.7px;width:418px;height:20px;background:#4f4f4f"></div>
<div style="left:0;top:300.7px;width:418px;height:20px;background:#474747"></div>
<div style="left:0;top:320.7px;width:418px;height:20px;background:#4f4f4f"></div>
<div style="left:8px;top:0;width:1px;height:323px;background:#a8a8a8"></div>
<div style="left:19.5px;top:60.7px;width:1px;height:30.0px;background:#a8a8a8"></div>
<div style="left:19.5px;top:120.7px;width:1px;height:30.0px;background:#a8a8a8"></div>
<div style="left:19.5px;top:200.7px;width:1px;height:70.0px;background:#a8a8a8"></div>
<div style="left:19.5px;top:300.7px;width:1px;height:30.0px;background:#a8a8a8"></div>
<div style="left:31px;top:220.7px;width:1px;height:5.5px;background:#a8a8a8"></div>
<div style="left:42.5px;top:235.0px;width:1px;height:15px;background:#a8a8a8"></div>
<div style="left:19.5px;top:315.0px;width:1px;height:20px;background:#a8a8a8"></div>
<div style="left:8.0px;top:10.7px;width:8px;height:1px;background:#a8a8a8"></div>
<svg style="left:17.0px;top:3.7px" width="14" height="14" viewBox="0 0 14 14"><defs><radialGradient id="sk" cx=".4" cy=".35" r=".7"><stop offset="0" stop-color="#c8dcf4"/><stop offset="1" stop-color="#6a8cb4"/></radialGradient></defs><circle cx="7" cy="7" r="6.8" fill="url(#sk)"/><path d="M0.5 5 H13.5 M0.5 9 H13.5 M5 0.5 V13.5 M9 0.5 V13.5" stroke="#8aa4c8" stroke-width=".8"/></svg>
<span class="t" style="left:36.0px;top:4.7px;color:#f5b62e">Cielo</span>
<div style="left:176px;top:0.7px;width:1px;height:20px;background:#303030"></div>
<div style="left:214px;top:0.7px;width:1px;height:20px;background:#5e5e5e"></div><div style="left:215px;top:0.7px;width:1px;height:20px;background:#333"></div>
<svg style="left:179px;top:4.7px" width="13" height="13"><rect x=".5" y=".5" width="12" height="12" rx="2" fill="#6c6c6c"/><path d="M1.5 11.5 L11.5 1.5" stroke="#4a4a4a" stroke-width="1.1"/></svg>
<svg style="left:195px;top:4.7px" width="7" height="13"><path d="M3.5 1 L6 3.5 L3.5 6 L1 3.5Z M3.5 8 L6 10.5 L3.5 13 L1 10.5Z" fill="#6c6c6c"/></svg>
<svg style="left:217px;top:1.7px" width="19" height="19"><defs><radialGradient id="gmat_grey_sel" cx=".38" cy=".35" r=".7"><stop offset="0" stop-color="#f0f0f0"/><stop offset="1" stop-color="#888"/></radialGradient></defs><rect width="19" height="19" fill="#8a8a8a"/><path d="M0 10 L10 0 H14 L0 14Z M5 19 L19 5 V9 L9 19Z" fill="#a8a8a8"/><circle cx="9.5" cy="9.5" r="8" fill="url(#gmat_grey_sel)"/><rect x="0.6" y="0.6" width="17.8" height="17.8" fill="none" stroke="#f7a620" stroke-width="1.3"/></svg>
<div style="left:8.0px;top:30.7px;width:8px;height:1px;background:#a8a8a8"></div>
<svg style="left:17.0px;top:23.7px" width="14" height="14" viewBox="0 0 14 14"><defs><radialGradient id="lt" cx=".45" cy=".35" r=".6"><stop offset="0" stop-color="#fff"/><stop offset="1" stop-color="#aaa"/></radialGradient></defs><path d="M7 1.5 C10.5 1.5 11.5 4.5 10.5 7 C9.8 8.6 9 9 9 11 H5 C5 9 4.2 8.6 3.5 7 C2.5 4.5 3.5 1.5 7 1.5Z" fill="url(#lt)" stroke="#777" stroke-width=".6"/><rect x="5.2" y="11.3" width="3.6" height="2.2" fill="#777"/></svg>
<span class="t" style="left:36.0px;top:24.7px;color:#c8c8c8">Luz</span>
<div style="left:176px;top:20.7px;width:1px;height:20px;background:#303030"></div>
<div style="left:214px;top:20.7px;width:1px;height:20px;background:#5e5e5e"></div><div style="left:215px;top:20.7px;width:1px;height:20px;background:#333"></div>
<svg style="left:179px;top:24.7px" width="13" height="13"><rect x=".5" y=".5" width="12" height="12" rx="2" fill="#6c6c6c"/><path d="M1.5 11.5 L11.5 1.5" stroke="#4a4a4a" stroke-width="1.1"/></svg>
<svg style="left:195px;top:24.7px" width="7" height="13"><path d="M3.5 1 L6 3.5 L3.5 6 L1 3.5Z M3.5 8 L6 10.5 L3.5 13 L1 10.5Z" fill="#6c6c6c"/></svg>
<svg style="left:203px;top:25.7px" width="11" height="10"><path d="M1 5.5 L4 8.5 L10 1.5" fill="none" stroke="#3ee08c" stroke-width="1.4"/></svg>
<div style="left:8.0px;top:50.7px;width:8px;height:1px;background:#a8a8a8"></div>
<div style="left:3.5px;top:46.2px;width:9px;height:9px;border:1px solid #a8a8a8;background:#4a4a4a"></div><div style="left:5.5px;top:50.2px;width:5px;height:1px;background:#c8c8c8"></div>
<svg style="left:17.0px;top:43.7px" width="14" height="14" viewBox="0 0 14 14"><path d="M3.5 10.5 C3.5 6.5 10.5 8 10.5 3.5" fill="none" stroke="#156a3a" stroke-width="5" stroke-linecap="round"/><path d="M3.5 10.5 C3.5 6.5 10.5 8 10.5 3.5" fill="none" stroke="#44dc88" stroke-width="3.6" stroke-linecap="round"/><circle cx="3.5" cy="11" r="2.2" fill="#a8f5c8"/><path d="M9 2.8 Q10.5 2 11.5 3" stroke="#c8ffe0" stroke-width="1" fill="none"/></svg>
<span class="t" style="left:36.0px;top:44.7px;color:#c8c8c8">Recorrido.1</span>
<div style="left:176px;top:40.7px;width:1px;height:20px;background:#303030"></div>
<div style="left:214px;top:40.7px;width:1px;height:20px;background:#5e5e5e"></div><div style="left:215px;top:40.7px;width:1px;height:20px;background:#333"></div>
<svg style="left:179px;top:44.7px" width="13" height="13"><rect x=".5" y=".5" width="12" height="12" rx="2" fill="#6c6c6c"/><path d="M1.5 11.5 L11.5 1.5" stroke="#4a4a4a" stroke-width="1.1"/></svg>
<svg style="left:195px;top:44.7px" width="7" height="13"><path d="M3.5 1 L6 3.5 L3.5 6 L1 3.5Z M3.5 8 L6 10.5 L3.5 13 L1 10.5Z" fill="#6c6c6c"/></svg>
<svg style="left:203px;top:45.7px" width="11" height="10"><path d="M1 5.5 L4 8.5 L10 1.5" fill="none" stroke="#3ee08c" stroke-width="1.4"/></svg>
<svg style="left:217px;top:43.7px" width="14" height="15"><defs><radialGradient id="od" cx=".35" cy=".3" r=".7"><stop offset="0" stop-color="#f5b060"/><stop offset="1" stop-color="#a85a10"/></radialGradient></defs><circle cx="4" cy="4" r="3.3" fill="url(#od)"/><circle cx="10.5" cy="10.5" r="3.5" fill="url(#od)"/></svg>
<div style="left:19.5px;top:70.7px;width:8px;height:1px;background:#a8a8a8"></div>
<svg style="left:28.5px;top:63.7px" width="14" height="14" viewBox="0 0 14 14"><circle cx="6.5" cy="7" r="5" fill="none" stroke="#7ab8ec" stroke-width="1.3"/></svg>
<span class="t" style="left:47.5px;top:64.7px;color:#c8c8c8">Círculo</span>
<div style="left:176px;top:60.7px;width:1px;height:20px;background:#303030"></div>
<div style="left:214px;top:60.7px;width:1px;height:20px;background:#5e5e5e"></div><div style="left:215px;top:60.7px;width:1px;height:20px;background:#333"></div>
<svg style="left:179px;top:64.7px" width="13" height="13"><rect x=".5" y=".5" width="12" height="12" rx="2" fill="#6c6c6c"/><path d="M1.5 11.5 L11.5 1.5" stroke="#4a4a4a" stroke-width="1.1"/></svg>
<svg style="left:195px;top:64.7px" width="7" height="13"><path d="M3.5 1 L6 3.5 L3.5 6 L1 3.5Z M3.5 8 L6 10.5 L3.5 13 L1 10.5Z" fill="#6c6c6c"/></svg>
<svg style="left:203px;top:65.7px" width="11" height="10"><path d="M1 5.5 L4 8.5 L10 1.5" fill="none" stroke="#3ee08c" stroke-width="1.4"/></svg>
<div style="left:19.5px;top:90.7px;width:8px;height:1px;background:#a8a8a8"></div>
<svg style="left:28.5px;top:83.7px" width="14" height="14" viewBox="0 0 14 14"><path d="M2 12.5 C4 11 5 7 6.5 5 C8 3 9 2.5 10 2.8 C11 3.2 11.5 4.5 12.5 6" fill="none" stroke="#7ab8ec" stroke-width="1.3"/><path d="M0 12.5 H5 M6.5 2.5 H13" stroke="#151515" stroke-width="1.4"/><circle cx="2.3" cy="12.5" r="1.1" fill="#fff"/><circle cx="9.7" cy="2.5" r="1.1" fill="#fff"/></svg>
<span class="t" style="left:47.5px;top:84.7px;color:#c8c8c8">Spline</span>
<div style="left:176px;top:80.7px;width:1px;height:20px;background:#303030"></div>
<div style="left:214px;top:80.7px;width:1px;height:20px;background:#5e5e5e"></div><div style="left:215px;top:80.7px;width:1px;height:20px;background:#333"></div>
<svg style="left:179px;top:84.7px" width="13" height="13"><rect x=".5" y=".5" width="12" height="12" rx="2" fill="#6c6c6c"/><path d="M1.5 11.5 L11.5 1.5" stroke="#4a4a4a" stroke-width="1.1"/></svg>
<svg style="left:195px;top:84.7px" width="7" height="13"><path d="M3.5 1 L6 3.5 L3.5 6 L1 3.5Z M3.5 8 L6 10.5 L3.5 13 L1 10.5Z" fill="#6c6c6c"/></svg>
<svg style="left:203px;top:85.7px" width="11" height="10"><path d="M1 5.5 L4 8.5 L10 1.5" fill="none" stroke="#3ee08c" stroke-width="1.4"/></svg>
<div style="left:8.0px;top:110.7px;width:8px;height:1px;background:#a8a8a8"></div>
<div style="left:3.5px;top:106.2px;width:9px;height:9px;border:1px solid #a8a8a8;background:#4a4a4a"></div><div style="left:5.5px;top:110.2px;width:5px;height:1px;background:#c8c8c8"></div>
<svg style="left:17.0px;top:103.7px" width="14" height="14" viewBox="0 0 14 14"><path d="M3.5 10.5 C3.5 6.5 10.5 8 10.5 3.5" fill="none" stroke="#156a3a" stroke-width="5" stroke-linecap="round"/><path d="M3.5 10.5 C3.5 6.5 10.5 8 10.5 3.5" fill="none" stroke="#44dc88" stroke-width="3.6" stroke-linecap="round"/><circle cx="3.5" cy="11" r="2.2" fill="#a8f5c8"/><path d="M9 2.8 Q10.5 2 11.5 3" stroke="#c8ffe0" stroke-width="1" fill="none"/></svg>
<span class="t" style="left:36.0px;top:104.7px;color:#c8c8c8">Recorrido</span>
<div style="left:176px;top:100.7px;width:1px;height:20px;background:#303030"></div>
<div style="left:214px;top:100.7px;width:1px;height:20px;background:#5e5e5e"></div><div style="left:215px;top:100.7px;width:1px;height:20px;background:#333"></div>
<svg style="left:179px;top:104.7px" width="13" height="13"><rect x=".5" y=".5" width="12" height="12" rx="2" fill="#6c6c6c"/><path d="M1.5 11.5 L11.5 1.5" stroke="#4a4a4a" stroke-width="1.1"/></svg>
<svg style="left:195px;top:104.7px" width="7" height="13"><path d="M3.5 1 L6 3.5 L3.5 6 L1 3.5Z M3.5 8 L6 10.5 L3.5 13 L1 10.5Z" fill="#6c6c6c"/></svg>
<svg style="left:203px;top:105.7px" width="11" height="10"><path d="M1 5.5 L4 8.5 L10 1.5" fill="none" stroke="#3ee08c" stroke-width="1.4"/></svg>
<svg style="left:217px;top:103.7px" width="14" height="15"><defs><radialGradient id="od" cx=".35" cy=".3" r=".7"><stop offset="0" stop-color="#f5b060"/><stop offset="1" stop-color="#a85a10"/></radialGradient></defs><circle cx="4" cy="4" r="3.3" fill="url(#od)"/><circle cx="10.5" cy="10.5" r="3.5" fill="url(#od)"/></svg>
<div style="left:19.5px;top:130.7px;width:8px;height:1px;background:#a8a8a8"></div>
<svg style="left:28.5px;top:123.7px" width="14" height="14" viewBox="0 0 14 14"><circle cx="6.5" cy="7" r="5" fill="none" stroke="#7ab8ec" stroke-width="1.3"/></svg>
<span class="t" style="left:47.5px;top:124.7px;color:#c8c8c8">Círculo.1</span>
<div style="left:176px;top:120.7px;width:1px;height:20px;background:#303030"></div>
<div style="left:214px;top:120.7px;width:1px;height:20px;background:#5e5e5e"></div><div style="left:215px;top:120.7px;width:1px;height:20px;background:#333"></div>
<svg style="left:179px;top:124.7px" width="13" height="13"><rect x=".5" y=".5" width="12" height="12" rx="2" fill="#6c6c6c"/><path d="M1.5 11.5 L11.5 1.5" stroke="#4a4a4a" stroke-width="1.1"/></svg>
<svg style="left:195px;top:124.7px" width="7" height="13"><path d="M3.5 1 L6 3.5 L3.5 6 L1 3.5Z M3.5 8 L6 10.5 L3.5 13 L1 10.5Z" fill="#6c6c6c"/></svg>
<svg style="left:203px;top:125.7px" width="11" height="10"><path d="M1 5.5 L4 8.5 L10 1.5" fill="none" stroke="#3ee08c" stroke-width="1.4"/></svg>
<div style="left:19.5px;top:150.7px;width:8px;height:1px;background:#a8a8a8"></div>
<svg style="left:28.5px;top:143.7px" width="14" height="14" viewBox="0 0 14 14"><path d="M2 12.5 C4 11 5 7 6.5 5 C8 3 9 2.5 10 2.8 C11 3.2 11.5 4.5 12.5 6" fill="none" stroke="#7ab8ec" stroke-width="1.3"/><path d="M0 12.5 H5 M6.5 2.5 H13" stroke="#151515" stroke-width="1.4"/><circle cx="2.3" cy="12.5" r="1.1" fill="#fff"/><circle cx="9.7" cy="2.5" r="1.1" fill="#fff"/></svg>
<span class="t" style="left:47.5px;top:144.7px;color:#c8c8c8">Spline.1</span>
<div style="left:176px;top:140.7px;width:1px;height:20px;background:#303030"></div>
<div style="left:214px;top:140.7px;width:1px;height:20px;background:#5e5e5e"></div><div style="left:215px;top:140.7px;width:1px;height:20px;background:#333"></div>
<svg style="left:179px;top:144.7px" width="13" height="13"><rect x=".5" y=".5" width="12" height="12" rx="2" fill="#6c6c6c"/><path d="M1.5 11.5 L11.5 1.5" stroke="#4a4a4a" stroke-width="1.1"/></svg>
<svg style="left:195px;top:144.7px" width="7" height="13"><path d="M3.5 1 L6 3.5 L3.5 6 L1 3.5Z M3.5 8 L6 10.5 L3.5 13 L1 10.5Z" fill="#6c6c6c"/></svg>
<svg style="left:203px;top:145.7px" width="11" height="10"><path d="M1 5.5 L4 8.5 L10 1.5" fill="none" stroke="#3ee08c" stroke-width="1.4"/></svg>
<div style="left:8.0px;top:170.7px;width:8px;height:1px;background:#a8a8a8"></div>
<svg style="left:17.0px;top:163.7px" width="14" height="14" viewBox="0 0 14 14"><path d="M7 2 L11.5 11 H2.5Z" fill="#74bcf2"/><g fill="#fff"><circle cx="7" cy="1.8" r="1.4"/><circle cx="1.8" cy="11.5" r="1.4"/><circle cx="12.2" cy="11.5" r="1.4"/></g></svg>
<span class="t" style="left:36.0px;top:164.7px;color:#c8c8c8">Esfera.2</span>
<div style="left:176px;top:160.7px;width:1px;height:20px;background:#303030"></div>
<div style="left:214px;top:160.7px;width:1px;height:20px;background:#5e5e5e"></div><div style="left:215px;top:160.7px;width:1px;height:20px;background:#333"></div>
<svg style="left:179px;top:164.7px" width="13" height="13"><rect x=".5" y=".5" width="12" height="12" rx="2" fill="#6c6c6c"/><path d="M1.5 11.5 L11.5 1.5" stroke="#4a4a4a" stroke-width="1.1"/></svg>
<svg style="left:195px;top:164.7px" width="7" height="13"><path d="M3.5 1 L6 3.5 L3.5 6 L1 3.5Z M3.5 8 L6 10.5 L3.5 13 L1 10.5Z" fill="#6c6c6c"/></svg>
<svg style="left:217px;top:163.7px" width="15" height="15"><rect x="0.5" y="0.5" width="14" height="14" fill="#fff" stroke="#e09030" stroke-width="1.3"/><rect x="2.0" y="2.0" width="3.3" height="3.3" fill="#101010"/><rect x="2.0" y="8.6" width="3.3" height="3.3" fill="#101010"/><rect x="5.3" y="5.3" width="3.3" height="3.3" fill="#101010"/><rect x="8.6" y="2.0" width="3.3" height="3.3" fill="#101010"/><rect x="8.6" y="8.6" width="3.3" height="3.3" fill="#101010"/></svg>
<svg style="left:237px;top:163.7px" width="14" height="15"><defs><radialGradient id="od" cx=".35" cy=".3" r=".7"><stop offset="0" stop-color="#f5b060"/><stop offset="1" stop-color="#a85a10"/></radialGradient></defs><circle cx="4" cy="4" r="3.3" fill="url(#od)"/><circle cx="10.5" cy="10.5" r="3.5" fill="url(#od)"/></svg>
<div style="left:8.0px;top:190.7px;width:8px;height:1px;background:#a8a8a8"></div>
<div style="left:3.5px;top:186.2px;width:9px;height:9px;border:1px solid #a8a8a8;background:#4a4a4a"></div><div style="left:5.5px;top:190.2px;width:5px;height:1px;background:#c8c8c8"></div>
<svg style="left:17.0px;top:183.7px" width="14" height="14" viewBox="0 0 14 14"><path d="M2 1 V13 H12" fill="none" stroke="#e0e0e0" stroke-width="1.4"/><text x="8.5" y="8" text-anchor="middle" font-family="Liberation Sans" font-weight="bold" font-size="9" fill="#bfe0ff">0</text></svg>
<span class="t" style="left:36.0px;top:184.7px;color:#c8c8c8">Nulo .2</span>
<div style="left:176px;top:180.7px;width:1px;height:20px;background:#303030"></div>
<div style="left:214px;top:180.7px;width:1px;height:20px;background:#5e5e5e"></div><div style="left:215px;top:180.7px;width:1px;height:20px;background:#333"></div>
<svg style="left:179px;top:184.7px" width="13" height="13"><rect x=".5" y=".5" width="12" height="12" rx="2" fill="#6c6c6c"/><path d="M1.5 11.5 L11.5 1.5" stroke="#4a4a4a" stroke-width="1.1"/></svg>
<svg style="left:195px;top:184.7px" width="7" height="13"><path d="M3.5 1 L6 3.5 L3.5 6 L1 3.5Z M3.5 8 L6 10.5 L3.5 13 L1 10.5Z" fill="#6c6c6c"/></svg>
<div style="left:19.5px;top:210.7px;width:8px;height:1px;background:#a8a8a8"></div>
<div style="left:15.0px;top:206.2px;width:9px;height:9px;border:1px solid #a8a8a8;background:#4a4a4a"></div><div style="left:17.0px;top:210.2px;width:5px;height:1px;background:#c8c8c8"></div>
<svg style="left:28.5px;top:203.7px" width="14" height="14" viewBox="0 0 14 14"><circle cx="7" cy="7" r="6.5" fill="#2a2a2a"/><rect x="2.8" y="3" width="8.5" height="8.5" rx="2.5" fill="#3ad07a"/><path d="M3 5 Q7 2.5 11 5" fill="none" stroke="#9af0c0" stroke-width="1.3"/><g fill="#ddd"><circle cx="1.5" cy="3" r=".8"/><circle cx="12.5" cy="3" r=".8"/><circle cx="2" cy="12" r=".8"/><circle cx="12" cy="12" r=".8"/></g></svg>
<span class="t" style="left:47.5px;top:204.7px;color:#c8c8c8">Subdivisión Superficie</span>
<div style="left:176px;top:200.7px;width:1px;height:20px;background:#303030"></div>
<div style="left:214px;top:200.7px;width:1px;height:20px;background:#5e5e5e"></div><div style="left:215px;top:200.7px;width:1px;height:20px;background:#333"></div>
<svg style="left:179px;top:204.7px" width="13" height="13"><rect x=".5" y=".5" width="12" height="12" rx="2" fill="#6c6c6c"/><path d="M1.5 11.5 L11.5 1.5" stroke="#4a4a4a" stroke-width="1.1"/></svg>
<svg style="left:195px;top:204.7px" width="7" height="13"><path d="M3.5 1 L6 3.5 L3.5 6 L1 3.5Z M3.5 8 L6 10.5 L3.5 13 L1 10.5Z" fill="#6c6c6c"/></svg>
<svg style="left:203px;top:205.7px" width="11" height="10"><path d="M1 5.5 L4 8.5 L10 1.5" fill="none" stroke="#3ee08c" stroke-width="1.4"/></svg>
<div style="left:31.0px;top:230.7px;width:8px;height:1px;background:#a8a8a8"></div>
<div style="left:26.5px;top:226.2px;width:9px;height:9px;border:1px solid #a8a8a8;background:#4a4a4a"></div><div style="left:28.5px;top:230.2px;width:5px;height:1px;background:#c8c8c8"></div>
<svg style="left:40.0px;top:223.7px" width="14" height="14" viewBox="0 0 14 14"><path d="M7 2 L11.5 11 H2.5Z" fill="#74bcf2"/><g fill="#fff"><circle cx="7" cy="1.8" r="1.4"/><circle cx="1.8" cy="11.5" r="1.4"/><circle cx="12.2" cy="11.5" r="1.4"/></g></svg>
<span class="t" style="left:59.0px;top:224.7px;color:#c8c8c8">Objeto Poligonal</span>
<div style="left:176px;top:220.7px;width:1px;height:20px;background:#303030"></div>
<div style="left:214px;top:220.7px;width:1px;height:20px;background:#5e5e5e"></div><div style="left:215px;top:220.7px;width:1px;height:20px;background:#333"></div>
<svg style="left:179px;top:224.7px" width="13" height="13"><rect x=".5" y=".5" width="12" height="12" rx="2" fill="#6c6c6c"/><path d="M1.5 11.5 L11.5 1.5" stroke="#4a4a4a" stroke-width="1.1"/></svg>
<svg style="left:195px;top:224.7px" width="7" height="13"><path d="M3.5 1 L6 3.5 L3.5 6 L1 3.5Z M3.5 8 L6 10.5 L3.5 13 L1 10.5Z" fill="#6c6c6c"/></svg>
<svg style="left:217px;top:221.7px" width="19" height="19"><defs><radialGradient id="gmat_red" cx=".38" cy=".35" r=".7"><stop offset="0" stop-color="#e04040"/><stop offset="1" stop-color="#600808"/></radialGradient></defs><rect width="19" height="19" fill="#8a8a8a"/><path d="M0 10 L10 0 H14 L0 14Z M5 19 L19 5 V9 L9 19Z" fill="#a8a8a8"/><circle cx="9.5" cy="9.5" r="8" fill="url(#gmat_red)"/></svg>
<div style="left:42.5px;top:250.7px;width:8px;height:1px;background:#a8a8a8"></div>
<svg style="left:51.5px;top:243.7px" width="14" height="14" viewBox="0 0 14 14"><path d="M7 2 L11.5 11 H2.5Z" fill="#74bcf2"/><g fill="#fff"><circle cx="7" cy="1.8" r="1.4"/><circle cx="1.8" cy="11.5" r="1.4"/><circle cx="12.2" cy="11.5" r="1.4"/></g></svg>
<span class="t" style="left:70.5px;top:244.7px;color:#c8c8c8">Cubo</span>
<div style="left:176px;top:240.7px;width:1px;height:20px;background:#303030"></div>
<div style="left:214px;top:240.7px;width:1px;height:20px;background:#5e5e5e"></div><div style="left:215px;top:240.7px;width:1px;height:20px;background:#333"></div>
<svg style="left:179px;top:244.7px" width="13" height="13"><rect x=".5" y=".5" width="12" height="12" rx="2" fill="#6c6c6c"/><path d="M1.5 11.5 L11.5 1.5" stroke="#4a4a4a" stroke-width="1.1"/></svg>
<svg style="left:195px;top:244.7px" width="7" height="13"><path d="M3.5 1 L6 3.5 L3.5 6 L1 3.5Z M3.5 8 L6 10.5 L3.5 13 L1 10.5Z" fill="#6c6c6c"/></svg>
<svg style="left:217px;top:243.7px" width="14" height="15"><defs><radialGradient id="od" cx=".35" cy=".3" r=".7"><stop offset="0" stop-color="#f5b060"/><stop offset="1" stop-color="#a85a10"/></radialGradient></defs><circle cx="4" cy="4" r="3.3" fill="url(#od)"/><circle cx="10.5" cy="10.5" r="3.5" fill="url(#od)"/></svg>
<svg style="left:237px;top:243.7px" width="15" height="15"><rect x="0.5" y="0.5" width="14" height="14" fill="#fff" stroke="#e09030" stroke-width="1.3"/><rect x="2.0" y="2.0" width="3.3" height="3.3" fill="#101010"/><rect x="2.0" y="8.6" width="3.3" height="3.3" fill="#101010"/><rect x="5.3" y="5.3" width="3.3" height="3.3" fill="#101010"/><rect x="8.6" y="2.0" width="3.3" height="3.3" fill="#101010"/><rect x="8.6" y="8.6" width="3.3" height="3.3" fill="#101010"/></svg>
<div style="left:19.5px;top:270.7px;width:8px;height:1px;background:#a8a8a8"></div>
<svg style="left:28.5px;top:263.7px" width="14" height="14" viewBox="0 0 14 14"><path d="M7 2 L11.5 11 H2.5Z" fill="#74bcf2"/><g fill="#fff"><circle cx="7" cy="1.8" r="1.4"/><circle cx="1.8" cy="11.5" r="1.4"/><circle cx="12.2" cy="11.5" r="1.4"/></g></svg>
<span class="t" style="left:47.5px;top:264.7px;color:#c8c8c8">Cilindro</span>
<div style="left:176px;top:260.7px;width:1px;height:20px;background:#303030"></div>
<div style="left:214px;top:260.7px;width:1px;height:20px;background:#5e5e5e"></div><div style="left:215px;top:260.7px;width:1px;height:20px;background:#333"></div>
<svg style="left:179px;top:264.7px" width="13" height="13"><rect x=".5" y=".5" width="12" height="12" rx="2" fill="#6c6c6c"/><path d="M1.5 11.5 L11.5 1.5" stroke="#4a4a4a" stroke-width="1.1"/></svg>
<svg style="left:195px;top:264.7px" width="7" height="13"><path d="M3.5 1 L6 3.5 L3.5 6 L1 3.5Z M3.5 8 L6 10.5 L3.5 13 L1 10.5Z" fill="#6c6c6c"/></svg>
<svg style="left:217px;top:263.7px" width="14" height="15"><defs><radialGradient id="od" cx=".35" cy=".3" r=".7"><stop offset="0" stop-color="#f5b060"/><stop offset="1" stop-color="#a85a10"/></radialGradient></defs><circle cx="4" cy="4" r="3.3" fill="url(#od)"/><circle cx="10.5" cy="10.5" r="3.5" fill="url(#od)"/></svg>
<svg style="left:237px;top:263.7px" width="15" height="15"><rect x="0.5" y="0.5" width="14" height="14" fill="#fff" stroke="#e09030" stroke-width="1.3"/><rect x="2.0" y="2.0" width="3.3" height="3.3" fill="#101010"/><rect x="2.0" y="8.6" width="3.3" height="3.3" fill="#101010"/><rect x="5.3" y="5.3" width="3.3" height="3.3" fill="#101010"/><rect x="8.6" y="2.0" width="3.3" height="3.3" fill="#101010"/><rect x="8.6" y="8.6" width="3.3" height="3.3" fill="#101010"/></svg>
<svg style="left:257px;top:261.7px" width="19" height="19"><defs><radialGradient id="gmat_black" cx=".38" cy=".35" r=".7"><stop offset="0" stop-color="#303030"/><stop offset="1" stop-color="#000"/></radialGradient></defs><rect width="19" height="19" fill="#8a8a8a"/><path d="M0 10 L10 0 H14 L0 14Z M5 19 L19 5 V9 L9 19Z" fill="#a8a8a8"/><circle cx="9.5" cy="9.5" r="8" fill="url(#gmat_black)"/></svg>
<div style="left:8.0px;top:290.7px;width:8px;height:1px;background:#a8a8a8"></div>
<div style="left:3.5px;top:286.2px;width:9px;height:9px;border:1px solid #a8a8a8;background:#4a4a4a"></div><div style="left:5.5px;top:290.2px;width:5px;height:1px;background:#c8c8c8"></div>
<svg style="left:17.0px;top:283.7px" width="14" height="14" viewBox="0 0 14 14"><path d="M2 1 V13 H12" fill="none" stroke="#e0e0e0" stroke-width="1.4"/><text x="8.5" y="8" text-anchor="middle" font-family="Liberation Sans" font-weight="bold" font-size="9" fill="#bfe0ff">0</text></svg>
<span class="t" style="left:36.0px;top:284.7px;color:#c8c8c8">Nulo .1</span>
<div style="left:176px;top:280.7px;width:1px;height:20px;background:#303030"></div>
<div style="left:214px;top:280.7px;width:1px;height:20px;background:#5e5e5e"></div><div style="left:215px;top:280.7px;width:1px;height:20px;background:#333"></div>
<svg style="left:179px;top:284.7px" width="13" height="13"><rect x=".5" y=".5" width="12" height="12" rx="2" fill="#6c6c6c"/><path d="M1.5 11.5 L11.5 1.5" stroke="#4a4a4a" stroke-width="1.1"/></svg>
<svg style="left:195px;top:284.7px" width="7" height="13"><path d="M3.5 1 L6 3.5 L3.5 6 L1 3.5Z M3.5 8 L6 10.5 L3.5 13 L1 10.5Z" fill="#6c6c6c"/></svg>
<div style="left:19.5px;top:310.7px;width:8px;height:1px;background:#a8a8a8"></div>
<div style="left:15.0px;top:306.2px;width:9px;height:9px;border:1px solid #a8a8a8;background:#4a4a4a"></div><div style="left:17.0px;top:310.2px;width:5px;height:1px;background:#c8c8c8"></div>
<svg style="left:28.5px;top:303.7px" width="14" height="14" viewBox="0 0 14 14"><circle cx="7" cy="7" r="6.5" fill="#2a2a2a"/><rect x="2.8" y="3" width="8.5" height="8.5" rx="2.5" fill="#3ad07a"/><path d="M3 5 Q7 2.5 11 5" fill="none" stroke="#9af0c0" stroke-width="1.3"/><g fill="#ddd"><circle cx="1.5" cy="3" r=".8"/><circle cx="12.5" cy="3" r=".8"/><circle cx="2" cy="12" r=".8"/><circle cx="12" cy="12" r=".8"/></g></svg>
<span class="t" style="left:47.5px;top:304.7px;color:#c8c8c8">Subdivisión Superficie</span>
<div style="left:176px;top:300.7px;width:1px;height:20px;background:#303030"></div>
<div style="left:214px;top:300.7px;width:1px;height:20px;background:#5e5e5e"></div><div style="left:215px;top:300.7px;width:1px;height:20px;background:#333"></div>
<svg style="left:179px;top:304.7px" width="13" height="13"><rect x=".5" y=".5" width="12" height="12" rx="2" fill="#6c6c6c"/><path d="M1.5 11.5 L11.5 1.5" stroke="#4a4a4a" stroke-width="1.1"/></svg>
<svg style="left:195px;top:304.7px" width="7" height="13"><path d="M3.5 1 L6 3.5 L3.5 6 L1 3.5Z M3.5 8 L6 10.5 L3.5 13 L1 10.5Z" fill="#6c6c6c"/></svg>
<svg style="left:203px;top:305.7px" width="11" height="10"><path d="M1 5.5 L4 8.5 L10 1.5" fill="none" stroke="#3ee08c" stroke-width="1.4"/></svg>
<div style="left:176px;top:320.7px;width:1px;height:20px;background:#303030"></div>
<div style="left:214px;top:320.7px;width:1px;height:20px;background:#5e5e5e"></div><div style="left:215px;top:320.7px;width:1px;height:20px;background:#333"></div>
<svg style="left:179px;top:324.7px" width="13" height="13"><rect x=".5" y=".5" width="12" height="12" rx="2" fill="#6c6c6c"/><path d="M1.5 11.5 L11.5 1.5" stroke="#4a4a4a" stroke-width="1.1"/></svg>
<svg style="left:195px;top:324.7px" width="7" height="13"><path d="M3.5 1 L6 3.5 L3.5 6 L1 3.5Z M3.5 8 L6 10.5 L3.5 13 L1 10.5Z" fill="#6c6c6c"/></svg>
<svg style="left:217px;top:321.7px" width="19" height="19"><defs><radialGradient id="gmat_red_part" cx=".38" cy=".35" r=".7"><stop offset="0" stop-color="#c02020"/><stop offset="1" stop-color="#600808"/></radialGradient></defs><rect width="19" height="19" fill="#8a8a8a"/><path d="M0 10 L10 0 H14 L0 14Z M5 19 L19 5 V9 L9 19Z" fill="#a8a8a8"/><circle cx="9.5" cy="9.5" r="8" fill="url(#gmat_red_part)"/></svg>
</div>
<svg style="left:40px;top:108px" width="860" height="466" viewBox="40 108 860 466"><defs><linearGradient id="rd" x1="0" y1="0" x2="1" y2="1"><stop offset="0" stop-color="#c83a32"/><stop offset=".55" stop-color="#a8201c"/><stop offset="1" stop-color="#7a1212"/></linearGradient></defs><path d="M518.9 122.2 C521.5 127 520 140 517.7 151 C514 162 510 172 502 192 C495 208 485 228 478 250 C475 262 474.5 272 474.9 280 C474.8 295 475 320 477.8 338.6 C479.5 348 482 356 484.7 362 C487.5 369 490 376 492.5 381.6 C495 388 498 396 500.3 403 L498 428 L480 446 L460 438 C450 425 445 415 444.6 405 C442 392 440.7 380 440.7 367.9 C439.8 350 439.4 340 439.4 328.8 C439.5 310 440.5 295 441.7 280 C443 262 447 248 454 230 C462 208 470 193 480 178 C490 162 505 140 514 127 C516 124 517.5 122.5 518.9 122.2Z" fill="#060606"/><path d="M498 190 C478 225 466 260 462 300 C459 340 462 380 472 415" fill="none" stroke="#202020" stroke-width=".9"/><path d="M505 178 C486 215 474 255 470 300 C467 345 470 385 480 412" fill="none" stroke="#181818" stroke-width=".7"/><path d="M466 460 L495.6 460 C496.5 464 496.5 467 496.2 469.3 C495 473 494 476 493.6 479.7 C494 485 495 490 495 494 C494.5 500 493.5 505 493 510 L467.6 508 C468 504 469 501 469.5 498 C470 492 470.5 486 470.8 481 C468 478 466 476 465 474 C465 471 465.3 469 465.6 466.7Z" fill="#5e5e5e"/><path d="M466 472.5 L495 471.5 M470 483.5 L494 482.5 M469.5 498 L494.5 497" stroke="#404040" stroke-width="1.3"/><path d="M442.7 408 C440 414 441 422 446 427.6 C449 431 455 434 460.5 434.3 L462 440 L462.7 450 L461.6 452 C463 455 467 459 471.5 462 C476 465 480 466.4 483.7 466.4 C490 466 495 464 497 462 L498.6 452 C498 448 497.5 445 497 443 C496 438 494 435 493.7 432 C495 429 496 427 497 426.5 C500 424.5 504 423.5 510.3 421 C512 419 513 416 512.5 414.3 C512 409 510.5 405 510.3 403.3 C509 399 507 396 505.8 395.5 C504 395 503 395.5 502.5 396.6 C501 399 501 401 501.4 403.3 C502 407 503 410 503.6 412 C501 414 499 415 497 415.5 C493 417 491 417.5 488 418.8 C485 421 483.5 424 482.6 426.5 L479.3 438.7 C478 434 476 430 474.8 428.7 C472 427 470 426 468.2 425.4 L457 425.4 C456 424 455.5 422.5 455 421 C453 416 451 412 449.4 410 C448 408 447 407 446 407 C444.5 406.5 443.3 407 442.7 408Z" fill="url(#rd)"/><path d="M464 440 C466 452 472 460 483 463 C492 461 495 455 496 445 M500 425 C505 422 508 418 507 405" fill="none" stroke="#d85048" stroke-width=".8" opacity=".7"/><circle cx="481.5" cy="451.4" r="4.6" fill="#0a0202"/><path d="M482.5 506 C487 507.5 491 510 494 513.6 C494.5 518 493.5 523 493 528 C495 530 497 532.5 498.5 535 C493 536.5 487 537.5 481 537.5 C476 537.5 471 536.5 465.5 535 C466.5 532.5 467.5 530 468 528 C468 523 469 517 469.5 512.3 C473.5 509.5 478 507.5 482.5 506Z" fill="url(#rd)"/><circle cx="482.5" cy="518.2" r="3" fill="#0a0202"/><path d="M474.7 535.7 L481 548 L489 535.7 M477 536 L481.5 543 L486.5 536" fill="none" stroke="#3a4550" stroke-width=".7"/></svg>
<div style="left:48px;top:579px;width:781px;height:22px;background:#333;border-radius:3px;border:1px solid #2a2a2a"></div>
<div style="left:49px;top:592px;width:779px;height:1px;background:#3e3e3e"></div>
<svg style="left:0;top:0" width="904" height="610"><rect x="53.9" y="580" width="1" height="20" fill="#c8c8c8"/><rect x="62.4" y="594" width="1" height="4" fill="#c8c8c8"/><rect x="70.9" y="594" width="1" height="4" fill="#c8c8c8"/><rect x="79.4" y="594" width="1" height="4" fill="#c8c8c8"/><rect x="87.9" y="594" width="1" height="4" fill="#c8c8c8"/><rect x="96.4" y="593" width="1" height="7" fill="#d8d8d8"/><rect x="105.0" y="594" width="1" height="4" fill="#c8c8c8"/><rect x="113.5" y="594" width="1" height="4" fill="#c8c8c8"/><rect x="122.0" y="594" width="1" height="4" fill="#c8c8c8"/><rect x="130.5" y="594" width="1" height="4" fill="#c8c8c8"/><rect x="139.0" y="593" width="1" height="7" fill="#d8d8d8"/><rect x="147.5" y="594" width="1" height="4" fill="#c8c8c8"/><rect x="156.0" y="594" width="1" height="4" fill="#c8c8c8"/><rect x="164.5" y="594" width="1" height="4" fill="#c8c8c8"/><rect x="173.0" y="594" width="1" height="4" fill="#c8c8c8"/><rect x="181.5" y="593" width="1" height="7" fill="#d8d8d8"/><rect x="190.1" y="594" width="1" height="4" fill="#c8c8c8"/><rect x="198.6" y="594" width="1" height="4" fill="#c8c8c8"/><rect x="207.1" y="594" width="1" height="4" fill="#c8c8c8"/><rect x="215.6" y="594" width="1" height="4" fill="#c8c8c8"/><rect x="224.1" y="593" width="1" height="7" fill="#d8d8d8"/><rect x="232.6" y="594" width="1" height="4" fill="#c8c8c8"/><rect x="241.1" y="594" width="1" height="4" fill="#c8c8c8"/><rect x="249.6" y="594" width="1" height="4" fill="#c8c8c8"/><rect x="258.1" y="594" width="1" height="4" fill="#c8c8c8"/><rect x="266.6" y="593" width="1" height="7" fill="#d8d8d8"/><rect x="275.2" y="594" width="1" height="4" fill="#c8c8c8"/><rect x="283.7" y="594" width="1" height="4" fill="#c8c8c8"/><rect x="292.2" y="594" width="1" height="4" fill="#c8c8c8"/><rect x="300.7" y="594" width="1" height="4" fill="#c8c8c8"/><rect x="309.2" y="580" width="1" height="20" fill="#c8c8c8"/><rect x="317.7" y="594" width="1" height="4" fill="#c8c8c8"/><rect x="326.2" y="594" width="1" height="4" fill="#c8c8c8"/><rect x="334.7" y="594" width="1" height="4" fill="#c8c8c8"/><rect x="343.2" y="594" width="1" height="4" fill="#c8c8c8"/><rect x="351.7" y="593" width="1" height="7" fill="#d8d8d8"/><rect x="360.3" y="594" width="1" height="4" fill="#c8c8c8"/><rect x="368.8" y="594" width="1" height="4" fill="#c8c8c8"/><rect x="377.3" y="594" width="1" height="4" fill="#c8c8c8"/><rect x="385.8" y="594" width="1" height="4" fill="#c8c8c8"/><rect x="394.3" y="593" width="1" height="7" fill="#d8d8d8"/><rect x="402.8" y="594" width="1" height="4" fill="#c8c8c8"/><rect x="411.3" y="594" width="1" height="4" fill="#c8c8c8"/><rect x="419.8" y="594" width="1" height="4" fill="#c8c8c8"/><rect x="428.3" y="594" width="1" height="4" fill="#c8c8c8"/><rect x="436.8" y="593" width="1" height="7" fill="#d8d8d8"/><rect x="445.4" y="594" width="1" height="4" fill="#c8c8c8"/><rect x="453.9" y="594" width="1" height="4" fill="#c8c8c8"/><rect x="462.4" y="594" width="1" height="4" fill="#c8c8c8"/><rect x="470.9" y="594" width="1" height="4" fill="#c8c8c8"/><rect x="479.4" y="593" width="1" height="7" fill="#d8d8d8"/><rect x="487.9" y="594" width="1" height="4" fill="#c8c8c8"/><rect x="496.4" y="594" width="1" height="4" fill="#c8c8c8"/><rect x="504.9" y="594" width="1" height="4" fill="#c8c8c8"/><rect x="513.4" y="594" width="1" height="4" fill="#c8c8c8"/><rect x="522.0" y="593" width="1" height="7" fill="#d8d8d8"/><rect x="530.5" y="594" width="1" height="4" fill="#c8c8c8"/><rect x="539.0" y="594" width="1" height="4" fill="#c8c8c8"/><rect x="547.5" y="594" width="1" height="4" fill="#c8c8c8"/><rect x="556.0" y="594" width="1" height="4" fill="#c8c8c8"/><rect x="564.5" y="580" width="1" height="20" fill="#c8c8c8"/><rect x="573.0" y="594" width="1" height="4" fill="#c8c8c8"/><rect x="581.5" y="594" width="1" height="4" fill="#c8c8c8"/><rect x="590.0" y="594" width="1" height="4" fill="#c8c8c8"/><rect x="598.5" y="594" width="1" height="4" fill="#c8c8c8"/><rect x="607.0" y="593" width="1" height="7" fill="#d8d8d8"/><rect x="615.6" y="594" width="1" height="4" fill="#c8c8c8"/><rect x="624.1" y="594" width="1" height="4" fill="#c8c8c8"/><rect x="632.6" y="594" width="1" height="4" fill="#c8c8c8"/><rect x="641.1" y="594" width="1" height="4" fill="#c8c8c8"/><rect x="649.6" y="593" width="1" height="7" fill="#d8d8d8"/><rect x="658.1" y="594" width="1" height="4" fill="#c8c8c8"/><rect x="666.6" y="594" width="1" height="4" fill="#c8c8c8"/><rect x="675.1" y="594" width="1" height="4" fill="#c8c8c8"/><rect x="683.6" y="594" width="1" height="4" fill="#c8c8c8"/><rect x="692.1" y="593" width="1" height="7" fill="#d8d8d8"/><rect x="700.7" y="594" width="1" height="4" fill="#c8c8c8"/><rect x="709.2" y="594" width="1" height="4" fill="#c8c8c8"/><rect x="717.7" y="594" width="1" height="4" fill="#c8c8c8"/><rect x="726.2" y="594" width="1" height="4" fill="#c8c8c8"/><rect x="734.7" y="593" width="1" height="7" fill="#d8d8d8"/><rect x="743.2" y="594" width="1" height="4" fill="#c8c8c8"/><rect x="751.7" y="594" width="1" height="4" fill="#c8c8c8"/><rect x="760.2" y="594" width="1" height="4" fill="#c8c8c8"/><rect x="768.7" y="594" width="1" height="4" fill="#c8c8c8"/><rect x="777.2" y="593" width="1" height="7" fill="#d8d8d8"/><rect x="785.8" y="594" width="1" height="4" fill="#c8c8c8"/><rect x="794.3" y="594" width="1" height="4" fill="#c8c8c8"/><rect x="802.8" y="594" width="1" height="4" fill="#c8c8c8"/><rect x="811.3" y="594" width="1" height="4" fill="#c8c8c8"/><rect x="819.8" y="580" width="1" height="20" fill="#c8c8c8"/></svg>
<span class="t" style="left:34.4px;top:579px;width:40px;text-align:center;color:#c8c8c8">0</span>
<div style="left:92px;top:580px;width:9px;height:13px;background:#3bd87c"></div>
<div style="left:96px;top:593px;width:1px;height:7px;background:#3bd87c"></div>
<span class="t" style="left:102px;top:579px;color:#55e08e;font-size:11.5px">5</span>
<span class="t" style="left:119.5px;top:579px;width:40px;text-align:center;color:#c8c8c8">10</span>
<span class="t" style="left:162.0px;top:579px;width:40px;text-align:center;color:#c8c8c8">15</span>
<span class="t" style="left:204.6px;top:579px;width:40px;text-align:center;color:#c8c8c8">20</span>
<span class="t" style="left:247.1px;top:579px;width:40px;text-align:center;color:#c8c8c8">25</span>
<span class="t" style="left:289.7px;top:579px;width:40px;text-align:center;color:#c8c8c8">30</span>
<span class="t" style="left:332.2px;top:579px;width:40px;text-align:center;color:#c8c8c8">35</span>
<span class="t" style="left:374.8px;top:579px;width:40px;text-align:center;color:#c8c8c8">40</span>
<span class="t" style="left:417.3px;top:579px;width:40px;text-align:center;color:#c8c8c8">45</span>
<span class="t" style="left:459.9px;top:579px;width:40px;text-align:center;color:#c8c8c8">50</span>
<span class="t" style="left:502.5px;top:579px;width:40px;text-align:center;color:#c8c8c8">55</span>
<span class="t" style="left:545.0px;top:579px;width:40px;text-align:center;color:#c8c8c8">60</span>
<span class="t" style="left:587.5px;top:579px;width:40px;text-align:center;color:#c8c8c8">65</span>
<span class="t" style="left:630.1px;top:579px;width:40px;text-align:center;color:#c8c8c8">70</span>
<span class="t" style="left:672.6px;top:579px;width:40px;text-align:center;color:#c8c8c8">75</span>
<span class="t" style="left:715.2px;top:579px;width:40px;text-align:center;color:#c8c8c8">80</span>
<span class="t" style="left:757.8px;top:579px;width:40px;text-align:center;color:#c8c8c8">85</span>
<span class="t" style="left:800.3px;top:579px;width:40px;text-align:center;color:#c8c8c8">90</span>
<div style="left:834px;top:581px;width:66px;height:17px;background:#333;border:1px solid #2a2a2a;border-bottom-color:#555;border-radius:2px"></div>
<span class="t" style="left:841px;top:582.5px;color:#cfcfcf">5 F</span>
<svg style="left:890px;top:584.0px" width="6" height="11" viewBox="0 0 6 11"><path d="M0 4.5 L3 0.5 L6 4.5Z M0 6.5 L3 10.5 L6 6.5Z" fill="#8a8a8a"/></svg>
<svg style="left:40px;top:609px" width="5" height="21"><defs><pattern id="gp5" width="3" height="3" patternUnits="userSpaceOnUse"><rect x="0" y="1" width="1" height="1" fill="#1e1e1e"/><rect x="1" y="0" width="1" height="1" fill="#1e1e1e"/><rect x="1" y="2" width="1" height="1" fill="#c4c4c4"/><rect x="2" y="1" width="1" height="1" fill="#c4c4c4"/></pattern></defs><rect width="5" height="21" fill="url(#gp5)"/></svg>
<svg style="left:40px;top:583px" width="5" height="15"><defs><pattern id="gp6" width="3" height="3" patternUnits="userSpaceOnUse"><rect x="0" y="1" width="1" height="1" fill="#1e1e1e"/><rect x="1" y="0" width="1" height="1" fill="#1e1e1e"/><rect x="1" y="2" width="1" height="1" fill="#c4c4c4"/><rect x="2" y="1" width="1" height="1" fill="#c4c4c4"/></pattern></defs><rect width="5" height="15" fill="url(#gp6)"/></svg>
<div style="left:48px;top:610px;width:66px;height:17px;background:#333;border:1px solid #2a2a2a;border-bottom-color:#555;border-radius:2px"></div>
<span class="t" style="left:55px;top:611.5px;color:#cfcfcf">0 F</span>
<svg style="left:104px;top:613.0px" width="6" height="11" viewBox="0 0 6 11"><path d="M0 4.5 L3 0.5 L6 4.5Z M0 6.5 L3 10.5 L6 6.5Z" fill="#8a8a8a"/></svg>
<div style="left:121px;top:610px;width:199px;height:16px;border-radius:4px;background:linear-gradient(#848484,#6a6a6a 60%,#5e5e5e);border:1px solid #3c3c3c"></div>
<svg style="left:123px;top:613px" width="10" height="10" viewBox="0 0 10 10"><path d="M9 1 L1 5 L9 9Z" fill="#e0e0e0"/></svg>
<svg style="left:307px;top:613px" width="10" height="10" viewBox="0 0 10 10"><path d="M1 1 L9 5 L1 9Z" fill="#e0e0e0"/></svg>
<span class="t" style="left:137px;top:611px;color:#2c2c2c">0 F</span>
<span class="t" style="left:280px;top:611px;color:#2c2c2c">90 F</span>
<div style="left:326px;top:610px;width:66px;height:17px;background:#333;border:1px solid #2a2a2a;border-bottom-color:#555;border-radius:2px"></div>
<span class="t" style="left:333px;top:611.5px;color:#cfcfcf">90 F</span>
<svg style="left:382px;top:613.0px" width="6" height="11" viewBox="0 0 6 11"><path d="M0 4.5 L3 0.5 L6 4.5Z M0 6.5 L3 10.5 L6 6.5Z" fill="#8a8a8a"/></svg>
<div style="left:403px;top:605px;width:28px;height:28px;background:#626262;border:1px solid #2c2c2c;border-radius:4px;overflow:hidden">
</div>
<svg style="left:403px;top:605px" width="28" height="28" viewBox="0 0 28 28"><path d="M7.5 9 V19" stroke="#151515" stroke-width="2.4"/><path d="M14.5 9.5 L10 14 L14.5 18.5 M20 9.5 L15.5 14 L20 18.5" fill="none" stroke="#151515" stroke-width="2.6"/></svg>
<div style="left:441px;top:605px;width:140px;height:28px;background:#626262;border:1px solid #2c2c2c;border-radius:4px;overflow:hidden">
<div style="left:27.1px;top:0;width:1px;height:26px;background:#505050"></div>
<div style="left:54.7px;top:0;width:1px;height:26px;background:#505050"></div>
<div style="left:82.3px;top:0;width:1px;height:26px;background:#505050"></div>
<div style="left:109.9px;top:0;width:1px;height:26px;background:#505050"></div>
</div>
<svg style="left:441px;top:605px" width="28" height="28" viewBox="0 0 28 28"><path d="M18.5 8.6 A6.3 6.3 0 1 0 18.5 19.4" fill="none" stroke="#151515" stroke-width="3.6"/><path d="M12 14 H24" stroke="#151515" stroke-width="2.6"/><path d="M11 14 L16 10 V18Z" fill="#151515"/></svg>
<svg style="left:469px;top:605px" width="28" height="28" viewBox="0 0 28 28"><path d="M9 14 L15 10.5 V17.5Z" fill="#151515"/><path d="M19.5 8.5 Q15.5 14 19.5 19.5" fill="none" stroke="#151515" stroke-width="2"/></svg>
<svg style="left:497px;top:605px" width="28" height="28" viewBox="0 0 28 28"><path d="M8.5 8 L22 14 L8.5 20 L11 14Z" fill="#3fe08e" stroke="#151515" stroke-width="1"/></svg>
<svg style="left:525px;top:605px" width="28" height="28" viewBox="0 0 28 28"><path d="M19 14 L13 10.5 V17.5Z" fill="#151515"/><path d="M8.5 8.5 Q12.5 14 8.5 19.5" fill="none" stroke="#151515" stroke-width="2"/></svg>
<svg style="left:553px;top:605px" width="28" height="28" viewBox="0 0 28 28"><path d="M9.5 8.6 A6.3 6.3 0 1 1 9.5 19.4" fill="none" stroke="#151515" stroke-width="3.6"/><path d="M4 14 H16" stroke="#151515" stroke-width="2.6"/><path d="M17 14 L12 10 V18Z" fill="#151515"/></svg>
<div style="left:591px;top:605px;width:28px;height:28px;background:#626262;border:1px solid #2c2c2c;border-radius:4px;overflow:hidden">
</div>
<svg style="left:591px;top:605px" width="28" height="28" viewBox="0 0 28 28"><path d="M20.5 9 V19" stroke="#151515" stroke-width="2.4"/><path d="M13.5 9.5 L18 14 L13.5 18.5 M8 9.5 L12.5 14 L8 18.5" fill="none" stroke="#151515" stroke-width="2.6"/></svg>
<div style="left:629px;top:605px;width:84px;height:28px;background:#626262;border:1px solid #2c2c2c;border-radius:4px;overflow:hidden">
<div style="left:26.8px;top:0;width:1px;height:26px;background:#505050"></div>
<div style="left:54.2px;top:0;width:1px;height:26px;background:#505050"></div>
</div>
<svg style="left:629px;top:605px" width="28" height="28" viewBox="0 0 28 28"><circle cx="14" cy="14" r="10.5" fill="#e65656" stroke="#1a1a1a" stroke-width="1.6"/><path d="M8 20 L15 13" stroke="#151515" stroke-width="2.4"/><circle cx="17" cy="11" r="3.6" fill="#151515"/><circle cx="17.5" cy="10.5" r="1.3" fill="#e65656"/><path d="M9 17 L11 19 M11 15 L13 17" stroke="#151515" stroke-width="1.6"/></svg>
<svg style="left:657px;top:605px" width="28" height="28" viewBox="0 0 28 28"><circle cx="14" cy="14" r="10.5" fill="#e65656" stroke="#1a1a1a" stroke-width="1.6"/><path d="M11.5 8 Q7.5 14 11.5 20 M16.5 8 Q20.5 14 16.5 20" fill="none" stroke="#151515" stroke-width="2.4"/></svg>
<svg style="left:685px;top:605px" width="28" height="28" viewBox="0 0 28 28"><circle cx="14" cy="14" r="10.5" fill="#e65656" stroke="#1a1a1a" stroke-width="1.6"/><text x="14" y="20" text-anchor="middle" font-family="Liberation Sans" font-weight="bold" font-size="16" fill="#151515">?</text></svg>
<div style="left:723px;top:605px;width:139px;height:28px;background:#626262;border:1px solid #2c2c2c;border-radius:4px;overflow:hidden">
<div style="left:0.0px;top:0;width:27.4px;height:26px;background:#8ba5cc"></div>
<div style="left:27.4px;top:0;width:27.4px;height:26px;background:#8ba5cc"></div>
<div style="left:26.9px;top:0;width:1px;height:26px;background:#505050"></div>
<div style="left:54.8px;top:0;width:27.4px;height:26px;background:#8ba5cc"></div>
<div style="left:54.3px;top:0;width:1px;height:26px;background:#505050"></div>
<div style="left:82.2px;top:0;width:27.4px;height:26px;background:#8ba5cc"></div>
<div style="left:81.7px;top:0;width:1px;height:26px;background:#505050"></div>
<div style="left:109.1px;top:0;width:1px;height:26px;background:#505050"></div>
</div>
<svg style="left:723px;top:605px" width="28" height="28" viewBox="0 0 28 28"><path d="M14 4 L17.5 8 H15.2 V12.8 H20 V10.5 L24 14 L20 17.5 V15.2 H15.2 V20 H17.5 L14 24 L10.5 20 H12.8 V15.2 H8 V17.5 L4 14 L8 10.5 V12.8 H12.8 V8 H10.5Z" fill="#f29326" stroke="#3a2a10" stroke-width=".6"/></svg>
<svg style="left:751px;top:605px" width="28" height="28" viewBox="0 0 28 28"><rect x="7.5" y="7.5" width="14" height="14" rx="1.5" fill="#f29326" stroke="#2a2a2a" stroke-width=".9"/><path d="M8 15 H14.5 V21.5 M14.5 15 L21 8" fill="none" stroke="#4a3510" stroke-width="1"/></svg>
<svg style="left:779px;top:605px" width="28" height="28" viewBox="0 0 28 28"><path d="M13.37 6.83 A7.2 7.2 0 0 0 9.09 19.27" fill="none" stroke="#2a2a2a" stroke-width="4.0"/><path d="M11.72 21.72 L6.91 21.61 L11.27 16.93Z" fill="#2a2a2a" stroke="#2a2a2a" stroke-width="1.2" stroke-linejoin="round"/><path d="M13.50 21.18 A7.2 7.2 0 0 0 18.82 8.65" fill="none" stroke="#2a2a2a" stroke-width="4.0"/><path d="M16.14 6.24 L20.96 6.27 L16.68 11.03Z" fill="#2a2a2a" stroke="#2a2a2a" stroke-width="1.2" stroke-linejoin="round"/><path d="M13.37 6.83 A7.2 7.2 0 0 0 9.09 19.27" fill="none" stroke="#f29326" stroke-width="2.8"/><path d="M11.72 21.72 L6.91 21.61 L11.27 16.93Z" fill="#f29326"/><path d="M13.50 21.18 A7.2 7.2 0 0 0 18.82 8.65" fill="none" stroke="#f29326" stroke-width="2.8"/><path d="M16.14 6.24 L20.96 6.27 L16.68 11.03Z" fill="#f29326"/></svg>
<svg style="left:807px;top:605px" width="28" height="28" viewBox="0 0 28 28"><circle cx="14" cy="14" r="10.5" fill="none" stroke="#222" stroke-width="3"/><circle cx="14" cy="14" r="10.5" fill="none" stroke="#e8891e" stroke-width="1.5"/><text x="14.3" y="19.5" text-anchor="middle" font-family="Liberation Sans" font-weight="bold" font-size="15" fill="#151515">P</text></svg>
<svg style="left:835px;top:605px" width="28" height="28" viewBox="0 0 28 28"><g fill="#f29326"><circle cx="7.5" cy="7.5" r="2.4"/><circle cx="14" cy="7.5" r="2.4"/><circle cx="7.5" cy="14" r="2.4"/><circle cx="14" cy="14" r="2.4"/></g><g fill="#151515"><circle cx="20.5" cy="7.5" r="2.4"/><circle cx="20.5" cy="14" r="2.4"/><circle cx="7.5" cy="20.5" r="2.4"/><circle cx="14" cy="20.5" r="2.4"/><circle cx="20.5" cy="20.5" r="2.4"/></g></svg>
<div style="left:873px;top:605px;width:27px;height:28px;background:#626262;border:1px solid #2c2c2c;border-radius:4px;overflow:hidden">
<div style="left:0.0px;top:0;width:25.0px;height:26px;background:#8ba5cc"></div>
</div>
<svg style="left:873px;top:605px" width="27" height="28" viewBox="0 0 27 28"><rect x="8" y="4" width="12" height="20" fill="#151515"/><rect x="10.5" y="5" width="7" height="5.3" fill="#e0a050"/><rect x="10.5" y="11.3" width="7" height="5.3" fill="#e0a050"/><rect x="10.5" y="17.6" width="7" height="5.4" fill="#e0a050"/><g fill="#999"><rect x="8.5" y="6" width="1.2" height="1.5"/><rect x="8.5" y="10" width="1.2" height="1.5"/><rect x="8.5" y="14" width="1.2" height="1.5"/><rect x="8.5" y="18" width="1.2" height="1.5"/><rect x="18.3" y="6" width="1.2" height="1.5"/><rect x="18.3" y="10" width="1.2" height="1.5"/><rect x="18.3" y="14" width="1.2" height="1.5"/><rect x="18.3" y="18" width="1.2" height="1.5"/></g></svg>
<svg style="left:894px;top:627px" width="5" height="5"><path d="M5 0V5H0Z" fill="#1a1a1a"/></svg>
<div style="left:39px;top:636px;width:563px;height:109px;background:#464646;border:1px solid #5a5a5a;border-right-color:#333;border-bottom-color:#333"></div>
<div style="left:40px;top:657px;width:561px;height:1px;background:#383838"></div>
<div style="left:40px;top:658px;width:561px;height:1px;background:#555"></div>
<svg style="left:46px;top:641px" width="11" height="12"><defs><pattern id="gp7" width="3" height="3" patternUnits="userSpaceOnUse"><rect x="0" y="1" width="1" height="1" fill="#1e1e1e"/><rect x="1" y="0" width="1" height="1" fill="#1e1e1e"/><rect x="1" y="2" width="1" height="1" fill="#c4c4c4"/><rect x="2" y="1" width="1" height="1" fill="#c4c4c4"/></pattern></defs><rect width="11" height="12" fill="url(#gp7)"/></svg>
<span class="t" style="left:67px;top:641px;color:#c4c4c4">Crear</span>
<span class="t" style="left:107px;top:641px;color:#c4c4c4">Edición</span>
<span class="t" style="left:159px;top:641px;color:#c4c4c4">Función</span>
<span class="t" style="left:215px;top:641px;color:#c4c4c4">Textura</span>
<div style="left:41px;top:661px;width:44px;height:57px;background:#5a5a5a;border:1px solid #333;overflow:hidden">
<div style="left:0;top:0;width:44px;height:44px;background:repeating-linear-gradient(135deg,#6c6c6c 0 5px,#a8a8a8 5px 9px)"></div>
</div>
<div style="left:41px;top:661px;width:44px;height:57px;border:2px solid #f7a620;border-bottom-width:0"></div>
<div style="left:41px;top:705px;width:44px;height:13px;background:#f7a620"></div>
<div style="left:69px;top:661px;width:16px;height:4px;background:#f7a620"></div>
<svg style="left:41px;top:661px" width="44" height="44" viewBox="0 0 44 44"><defs><radialGradient id="m1" cx=".4" cy=".35" r=".7"><stop offset="0" stop-color="#f0f0f0"/><stop offset=".55" stop-color="#c4c4c4"/><stop offset=".85" stop-color="#8a8a8a"/><stop offset="1" stop-color="#202020"/></radialGradient></defs><ellipse cx="25" cy="26" rx="17" ry="16" fill="#3a3a3a" opacity=".55"/><circle cx="20" cy="20.5" r="18" fill="url(#m1)"/></svg>
<span class="t" style="left:43px;top:704px;color:#151515;font-size:11px;width:42px;overflow:hidden">Mat.1</span>
<div style="left:90px;top:661px;width:44px;height:57px;background:#5a5a5a;border:1px solid #333;overflow:hidden">
<div style="left:0;top:0;width:44px;height:44px;background:repeating-linear-gradient(135deg,#6c6c6c 0 5px,#a8a8a8 5px 9px)"></div>
</div>
<svg style="left:90px;top:661px" width="44" height="44" viewBox="0 0 44 44"><defs><radialGradient id="m2" cx=".4" cy=".35" r=".7"><stop offset="0" stop-color="#6a6a6a"/><stop offset=".7" stop-color="#4a4a4a"/><stop offset="1" stop-color="#2a2a2a"/></radialGradient></defs><path d="M0 30 L18 32 L16 42 H0Z" fill="#3c3c3c"/><circle cx="22" cy="22" r="18.5" fill="url(#m2)"/><rect x="33" y="3" width="10" height="4" fill="#fff"/></svg>
<span class="t" style="left:92px;top:704px;color:#d0d0d0;font-size:11px;width:42px;overflow:hidden">Carpet -</span>
<div style="left:139px;top:661px;width:44px;height:57px;background:#5a5a5a;border:1px solid #333;overflow:hidden">
<div style="left:0;top:0;width:44px;height:44px;background:repeating-linear-gradient(135deg,#6c6c6c 0 5px,#a8a8a8 5px 9px)"></div>
</div>
<svg style="left:139px;top:661px" width="44" height="44" viewBox="0 0 44 44"><defs><radialGradient id="m3" cx=".35" cy=".35" r=".7"><stop offset="0" stop-color="#ff8a7a"/><stop offset=".15" stop-color="#d02a20"/><stop offset=".7" stop-color="#9a0c0c"/><stop offset="1" stop-color="#3a0505"/></radialGradient></defs><circle cx="22" cy="22" r="19" fill="url(#m3)"/><ellipse cx="14" cy="16" rx="3" ry="2" fill="#fff" opacity=".8"/></svg>
<span class="t" style="left:141px;top:704px;color:#d0d0d0;font-size:11px;width:42px;overflow:hidden">Car Pain</span>
<div style="left:188px;top:661px;width:44px;height:57px;background:#5a5a5a;border:1px solid #333;overflow:hidden">
<div style="left:0;top:0;width:44px;height:44px;background:repeating-linear-gradient(135deg,#6c6c6c 0 5px,#a8a8a8 5px 9px)"></div>
</div>
<svg style="left:188px;top:661px" width="44" height="44" viewBox="0 0 44 44"><defs><radialGradient id="m4" cx=".45" cy=".45" r=".6"><stop offset="0" stop-color="#202020"/><stop offset="1" stop-color="#030303"/></radialGradient></defs><circle cx="22" cy="22" r="19" fill="url(#m4)"/><ellipse cx="20" cy="20" rx="8" ry="1" fill="#555" opacity=".6"/></svg>
<span class="t" style="left:190px;top:704px;color:#d0d0d0;font-size:11px;width:42px;overflow:hidden">Stainles</span>
<div style="left:237px;top:661px;width:44px;height:57px;background:#5a5a5a;border:1px solid #333;overflow:hidden">
<div style="left:0;top:0;width:44px;height:44px;background:repeating-linear-gradient(135deg,#6c6c6c 0 5px,#a8a8a8 5px 9px)"></div>
</div>
<svg style="left:237px;top:661px" width="44" height="44" viewBox="0 0 44 44"><defs><radialGradient id="m5" cx=".45" cy=".4" r=".65"><stop offset="0" stop-color="#a0a8a0"/><stop offset=".65" stop-color="#6a746a"/><stop offset="1" stop-color="#1a201a"/></radialGradient></defs><circle cx="22" cy="22" r="19" fill="url(#m5)"/><path d="M10 12 Q6 22 11 34 M19 6 Q15 20 21 38 M28 6 Q24 22 30 38 M35 12 Q33 22 36 32" fill="none" stroke="#6a4a20" stroke-width="2"/><path d="M19 6 Q15 20 21 38 M28 6 Q24 22 30 38" fill="none" stroke="#d0a040" stroke-width=".8"/></svg>
<span class="t" style="left:239px;top:704px;color:#d0d0d0;font-size:11px;width:42px;overflow:hidden">Mat</span>
<div style="left:603px;top:636px;width:298px;height:109px;background:#464646;border:1px solid #5a5a5a;border-right-color:#333;border-bottom-color:#333"></div>
<div style="left:604px;top:656px;width:296px;height:1px;background:#383838"></div>
<div style="left:604px;top:657px;width:296px;height:1px;background:#555"></div>
<svg style="left:609px;top:641px" width="12" height="12"><defs><pattern id="gp8" width="3" height="3" patternUnits="userSpaceOnUse"><rect x="0" y="1" width="1" height="1" fill="#1e1e1e"/><rect x="1" y="0" width="1" height="1" fill="#1e1e1e"/><rect x="1" y="2" width="1" height="1" fill="#c4c4c4"/><rect x="2" y="1" width="1" height="1" fill="#c4c4c4"/></pattern></defs><rect width="12" height="12" fill="url(#gp8)"/></svg>
<span class="t" style="left:628px;top:640px;color:#c4c4c4">Posición</span>
<span class="t" style="left:720px;top:640px;color:#c4c4c4">Tamaño</span>
<span class="t" style="left:812px;top:640px;color:#c4c4c4">Rotación</span>
<span class="t" style="left:608px;top:664px;color:#c4c4c4">X</span>
<span class="t" style="left:705px;top:664px;color:#c4c4c4">X</span>
<span class="t" style="left:803px;top:664px;color:#c4c4c4">H</span>
<div style="left:618px;top:663px;width:84px;height:17px;background:#333;border:1px solid #2a2a2a;border-bottom-color:#555;border-radius:2px"></div>
<span class="t" style="left:625px;top:664.5px;color:#cfcfcf">0 cm</span>
<svg style="left:692px;top:666.0px" width="6" height="11" viewBox="0 0 6 11"><path d="M0 4.5 L3 0.5 L6 4.5Z M0 6.5 L3 10.5 L6 6.5Z" fill="#8a8a8a"/></svg>
<div style="left:715px;top:663px;width:84px;height:17px;background:#333;border:1px solid #2a2a2a;border-bottom-color:#555;border-radius:2px"></div>
<span class="t" style="left:722px;top:664.5px;color:#cfcfcf">0 cm</span>
<svg style="left:789px;top:666.0px" width="6" height="11" viewBox="0 0 6 11"><path d="M0 4.5 L3 0.5 L6 4.5Z M0 6.5 L3 10.5 L6 6.5Z" fill="#8a8a8a"/></svg>
<div style="left:814px;top:663px;width:84px;height:17px;background:#333;border:1px solid #2a2a2a;border-bottom-color:#555;border-radius:2px"></div>
<span class="t" style="left:821px;top:664.5px;color:#cfcfcf">0 °</span>
<svg style="left:888px;top:666.0px" width="6" height="11" viewBox="0 0 6 11"><path d="M0 4.5 L3 0.5 L6 4.5Z M0 6.5 L3 10.5 L6 6.5Z" fill="#8a8a8a"/></svg>
<span class="t" style="left:608px;top:684px;color:#c4c4c4">Y</span>
<span class="t" style="left:705px;top:684px;color:#c4c4c4">Y</span>
<span class="t" style="left:803px;top:684px;color:#c4c4c4">P</span>
<div style="left:618px;top:683px;width:84px;height:17px;background:#333;border:1px solid #2a2a2a;border-bottom-color:#555;border-radius:2px"></div>
<span class="t" style="left:625px;top:684.5px;color:#cfcfcf">0 cm</span>
<svg style="left:692px;top:686.0px" width="6" height="11" viewBox="0 0 6 11"><path d="M0 4.5 L3 0.5 L6 4.5Z M0 6.5 L3 10.5 L6 6.5Z" fill="#8a8a8a"/></svg>
<div style="left:715px;top:683px;width:84px;height:17px;background:#333;border:1px solid #2a2a2a;border-bottom-color:#555;border-radius:2px"></div>
<span class="t" style="left:722px;top:684.5px;color:#cfcfcf">0 cm</span>
<svg style="left:789px;top:686.0px" width="6" height="11" viewBox="0 0 6 11"><path d="M0 4.5 L3 0.5 L6 4.5Z M0 6.5 L3 10.5 L6 6.5Z" fill="#8a8a8a"/></svg>
<div style="left:814px;top:683px;width:84px;height:17px;background:#333;border:1px solid #2a2a2a;border-bottom-color:#555;border-radius:2px"></div>
<span class="t" style="left:821px;top:684.5px;color:#cfcfcf">0 °</span>
<svg style="left:888px;top:686.0px" width="6" height="11" viewBox="0 0 6 11"><path d="M0 4.5 L3 0.5 L6 4.5Z M0 6.5 L3 10.5 L6 6.5Z" fill="#8a8a8a"/></svg>
<span class="t" style="left:608px;top:704px;color:#c4c4c4">Z</span>
<span class="t" style="left:705px;top:704px;color:#c4c4c4">Z</span>
<span class="t" style="left:803px;top:704px;color:#c4c4c4">B</span>
<div style="left:618px;top:703px;width:84px;height:17px;background:#333;border:1px solid #2a2a2a;border-bottom-color:#555;border-radius:2px"></div>
<span class="t" style="left:625px;top:704.5px;color:#cfcfcf">0 cm</span>
<svg style="left:692px;top:706.0px" width="6" height="11" viewBox="0 0 6 11"><path d="M0 4.5 L3 0.5 L6 4.5Z M0 6.5 L3 10.5 L6 6.5Z" fill="#8a8a8a"/></svg>
<div style="left:715px;top:703px;width:84px;height:17px;background:#333;border:1px solid #2a2a2a;border-bottom-color:#555;border-radius:2px"></div>
<span class="t" style="left:722px;top:704.5px;color:#cfcfcf">0 cm</span>
<svg style="left:789px;top:706.0px" width="6" height="11" viewBox="0 0 6 11"><path d="M0 4.5 L3 0.5 L6 4.5Z M0 6.5 L3 10.5 L6 6.5Z" fill="#8a8a8a"/></svg>
<div style="left:814px;top:703px;width:84px;height:17px;background:#333;border:1px solid #2a2a2a;border-bottom-color:#555;border-radius:2px"></div>
<span class="t" style="left:821px;top:704.5px;color:#cfcfcf">0 °</span>
<svg style="left:888px;top:706.0px" width="6" height="11" viewBox="0 0 6 11"><path d="M0 4.5 L3 0.5 L6 4.5Z M0 6.5 L3 10.5 L6 6.5Z" fill="#8a8a8a"/></svg>
<div style="left:618px;top:726px;width:84px;height:16px;border-radius:5px;background:linear-gradient(#757575,#5c5c5c);border:1px solid #3a3a3a"></div>
<span class="t" style="left:626px;top:727px;color:#dcdcdc">Objeto (Rel)</span>
<svg style="left:687px;top:731px" width="9" height="6" viewBox="0 0 9 6"><path d="M0 0 H9 L4.5 5Z" fill="#e0e0e0"/></svg>
<div style="left:715px;top:726px;width:84px;height:16px;border-radius:5px;background:linear-gradient(#757575,#5c5c5c);border:1px solid #3a3a3a"></div>
<span class="t" style="left:723px;top:727px;color:#dcdcdc">Tamaño</span>
<svg style="left:784px;top:731px" width="9" height="6" viewBox="0 0 9 6"><path d="M0 0 H9 L4.5 5Z" fill="#e0e0e0"/></svg>
<div style="left:814px;top:726px;width:84px;height:17px;border-radius:5px;background:linear-gradient(#757575,#5c5c5c);border:1px solid #3a3a3a"></div>
<span class="t" style="left:814px;top:727px;width:84px;text-align:center;color:#dcdcdc">Aplicar</span>
<div style="left:0px;top:748px;width:901px;height:1px;background:#5a5a5a"></div>
<div style="left:0px;top:749px;width:901px;height:17px;background:#474747"></div>
<div style="left:900px;top:748px;width:1px;height:18px;background:#333"></div>
<svg style="left:5px;top:752px" width="11" height="13"><defs><pattern id="gp9" width="3" height="3" patternUnits="userSpaceOnUse"><rect x="0" y="1" width="1" height="1" fill="#1e1e1e"/><rect x="1" y="0" width="1" height="1" fill="#1e1e1e"/><rect x="1" y="2" width="1" height="1" fill="#c4c4c4"/><rect x="2" y="1" width="1" height="1" fill="#c4c4c4"/></pattern></defs><rect width="11" height="13" fill="url(#gp9)"/></svg>
<span class="t" style="left:26px;top:752px;color:#c8c8c8">00:00:00</span>
<div style="left:80px;top:752px;width:1px;height:14px;background:#2e2e2e"></div>
<span class="t" style="left:85px;top:752px;color:#c8c8c8">Añadir Objeto Subdivisión Superficie</span>
<div style="left:904px;top:400px;width:419px;height:368px;background:#464646;border:1px solid #5a5a5a;border-right:0;border-bottom:0"></div>
<div style="left:905px;top:422px;width:418px;height:1px;background:#383838"></div>
<div style="left:905px;top:423px;width:418px;height:1px;background:#585858"></div>
<svg style="left:910px;top:405px" width="12" height="12"><defs><pattern id="gp10" width="3" height="3" patternUnits="userSpaceOnUse"><rect x="0" y="1" width="1" height="1" fill="#1e1e1e"/><rect x="1" y="0" width="1" height="1" fill="#1e1e1e"/><rect x="1" y="2" width="1" height="1" fill="#c4c4c4"/><rect x="2" y="1" width="1" height="1" fill="#c4c4c4"/></pattern></defs><rect width="12" height="12" fill="url(#gp10)"/></svg>
<span class="t" style="left:932px;top:405px;color:#c4c4c4">Modo</span>
<span class="t" style="left:977px;top:405px;color:#c4c4c4">Editar</span>
<span class="t" style="left:1020px;top:405px;color:#c4c4c4">Datos de Usuario</span>
<svg style="left:1199px;top:403px" width="38" height="16" viewBox="0 0 38 16"><path d="M1 8 L16 2 V14Z" fill="#151515"/><path d="M17 2 L35 8 L17 14Z" fill="#555" stroke="#5e5e5e" stroke-width=".5"/></svg>
<svg style="left:1243px;top:402px" width="16" height="17" viewBox="0 0 16 17"><path d="M8 1 L14 15 H2Z" fill="#151515"/></svg>
<svg style="left:1269px;top:402px" width="16" height="16" viewBox="0 0 16 16"><circle cx="6" cy="6" r="4.2" fill="none" stroke="#151515" stroke-width="1.3"/><path d="M9 9 L14 14.5" stroke="#151515" stroke-width="1.8"/></svg>
<svg style="left:1290px;top:402px" width="16" height="17" viewBox="0 0 16 17"><rect x="2" y="8" width="11" height="8" rx="1" fill="none" stroke="#151515" stroke-width="1.4"/><path d="M4.5 8 V5 A3 3 0 0 1 10.5 5" fill="none" stroke="#151515" stroke-width="1.4"/><rect x="6.5" y="11" width="2" height="2.5" fill="#151515"/></svg>
<svg style="left:1308px;top:402px" width="15" height="17" viewBox="0 0 15 17"><circle cx="8.5" cy="8.5" r="6.5" fill="none" stroke="#151515" stroke-width="1.4"/><circle cx="8.5" cy="8.5" r="3.5" fill="none" stroke="#151515" stroke-width="1.4"/><circle cx="8.5" cy="8.5" r="1.2" fill="#151515"/></svg>
<svg style="left:907px;top:425px" width="22" height="22" viewBox="0 0 22 22"><defs><radialGradient id="ts" cx=".38" cy=".35" r=".7"><stop offset="0" stop-color="#f4f4f4"/><stop offset=".7" stop-color="#a8a8a8"/><stop offset="1" stop-color="#505050"/></radialGradient></defs><rect width="22" height="22" fill="#7a7a7a"/><path d="M0 12 L12 0 H17 L0 17Z M6 22 L22 6 V11 L11 22Z" fill="#a8a8a8"/><circle cx="10.5" cy="11" r="9" fill="url(#ts)"/></svg>
<span class="t" style="left:933px;top:429px;color:#d2d2d2;font-size:12px">Etiqueta de Textura [Textura]</span>
<div style="left:907px;top:449px;width:232px;height:18px;border:1px solid #2a2a2a;border-radius:4px;background:#626262;overflow:hidden"><div style="left:77px;top:0;width:76px;height:16px;background:#8ba5cc"></div><div style="left:76px;top:0;width:1px;height:16px;background:#3a3a3a"></div><div style="left:153px;top:0;width:1px;height:16px;background:#3a3a3a"></div></div>
<span class="t" style="left:908px;top:451px;width:76px;text-align:center;color:#d6d6d6">Básico</span>
<span class="t" style="left:985px;top:451px;width:76px;text-align:center;color:#151515">Etiqueta</span>
<span class="t" style="left:1062px;top:451px;width:76px;text-align:center;color:#d6d6d6">Coordenadas</span>
<div style="left:907px;top:472px;width:416px;height:15px;background:#353535"></div>
<span class="t" style="left:909px;top:472px;color:#d2d2d2;font-weight:bold;font-size:11px">Propiedades de la Etiqueta</span>
<svg style="left:909px;top:494px;" width="14" height="14"><circle cx="7" cy="7" r="6.9" fill="#6a6a6a"/><circle cx="7" cy="7" r="5.6" fill="#4a4a4a"/><circle cx="7" cy="7" r="4.5" fill="#8c8c8c" stroke="#1c1c1c" stroke-width="1.3"/></svg>
<svg style="left:929px;top:496px" width="6" height="9" viewBox="0 0 6 9"><path d="M1 0.5 L5 4.5 L1 8.5Z" fill="#151515"/></svg>
<span class="t" style="left:938px;top:494px;color:#d0d0d0">Material</span>
<svg style="left:986px;top:504px" width="60" height="1"><rect x="0" y="0" width="2" height="1" fill="#a8a8a8"/><rect x="6" y="0" width="2" height="1" fill="#a8a8a8"/><rect x="12" y="0" width="2" height="1" fill="#a8a8a8"/><rect x="18" y="0" width="2" height="1" fill="#a8a8a8"/><rect x="24" y="0" width="2" height="1" fill="#a8a8a8"/><rect x="30" y="0" width="2" height="1" fill="#a8a8a8"/><rect x="36" y="0" width="2" height="1" fill="#a8a8a8"/><rect x="42" y="0" width="2" height="1" fill="#a8a8a8"/><rect x="48" y="0" width="2" height="1" fill="#a8a8a8"/><rect x="54" y="0" width="2" height="1" fill="#a8a8a8"/></svg>
<div style="left:1049px;top:492px;width:262px;height:17px;background:#333;border:1px solid #2a2a2a;border-bottom-color:#555;border-radius:3px"></div>
<span class="t" style="left:1056px;top:494px;color:#cfcfcf">Mat.1</span>
<svg style="left:1291px;top:492px" width="17" height="17" viewBox="0 0 17 17"><defs><radialGradient id="ms" cx=".38" cy=".35" r=".7"><stop offset="0" stop-color="#f4f4f4"/><stop offset=".7" stop-color="#a8a8a8"/><stop offset="1" stop-color="#505050"/></radialGradient></defs><rect width="17" height="17" fill="#7a7a7a"/><path d="M0 9 L9 0 H13 L0 13Z M4 17 L17 4 V8 L8 17Z" fill="#a8a8a8"/><circle cx="8.5" cy="8.5" r="7" fill="url(#ms)"/></svg>
<div style="left:1310px;top:492px;width:12px;height:17px;background:linear-gradient(#777,#5e5e5e);border:1px solid #333;border-radius:3px"></div>
<svg style="left:1313px;top:497px" width="6" height="8" viewBox="0 0 6 8"><path d="M1 0.5 L5 4 L1 7.5Z" fill="#ddd"/></svg>
<svg style="left:909px;top:514px;" width="14" height="14"><circle cx="7" cy="7" r="6.9" fill="#6a6a6a"/><circle cx="7" cy="7" r="5.6" fill="#4a4a4a"/><circle cx="7" cy="7" r="4.5" fill="#8c8c8c" stroke="#1c1c1c" stroke-width="1.3"/></svg>
<span class="t" style="left:927px;top:514px;color:#d0d0d0">Selección</span>
<svg style="left:980px;top:524px" width="66" height="1"><rect x="0" y="0" width="2" height="1" fill="#a8a8a8"/><rect x="6" y="0" width="2" height="1" fill="#a8a8a8"/><rect x="12" y="0" width="2" height="1" fill="#a8a8a8"/><rect x="18" y="0" width="2" height="1" fill="#a8a8a8"/><rect x="24" y="0" width="2" height="1" fill="#a8a8a8"/><rect x="30" y="0" width="2" height="1" fill="#a8a8a8"/><rect x="36" y="0" width="2" height="1" fill="#a8a8a8"/><rect x="42" y="0" width="2" height="1" fill="#a8a8a8"/><rect x="48" y="0" width="2" height="1" fill="#a8a8a8"/><rect x="54" y="0" width="2" height="1" fill="#a8a8a8"/><rect x="60" y="0" width="2" height="1" fill="#a8a8a8"/></svg>
<div style="left:1049px;top:512px;width:274px;height:17px;background:#333;border:1px solid #2a2a2a;border-bottom-color:#555;border-right:0;border-radius:3px 0 0 3px"></div>
<svg style="left:909px;top:534px;" width="14" height="14"><circle cx="7" cy="7" r="6.9" fill="#6a6a6a"/><circle cx="7" cy="7" r="5.6" fill="#4a4a4a"/><circle cx="7" cy="7" r="4.5" fill="#8c8c8c" stroke="#1c1c1c" stroke-width="1.3"/></svg>
<span class="t" style="left:927px;top:534px;color:#d0d0d0">Proyección</span>
<svg style="left:986px;top:544px" width="60" height="1"><rect x="0" y="0" width="2" height="1" fill="#a8a8a8"/><rect x="6" y="0" width="2" height="1" fill="#a8a8a8"/><rect x="12" y="0" width="2" height="1" fill="#a8a8a8"/><rect x="18" y="0" width="2" height="1" fill="#a8a8a8"/><rect x="24" y="0" width="2" height="1" fill="#a8a8a8"/><rect x="30" y="0" width="2" height="1" fill="#a8a8a8"/><rect x="36" y="0" width="2" height="1" fill="#a8a8a8"/><rect x="42" y="0" width="2" height="1" fill="#a8a8a8"/><rect x="48" y="0" width="2" height="1" fill="#a8a8a8"/><rect x="54" y="0" width="2" height="1" fill="#a8a8a8"/></svg>
<div style="left:1049px;top:532px;width:274px;height:16px;border-radius:4px 0 0 4px;background:linear-gradient(#767676,#5e5e5e);border:1px solid #363636;border-right:0"></div>
<span class="t" style="left:1056px;top:533px;color:#dcdcdc">Esférica</span>
<svg style="left:909px;top:553px;" width="14" height="14"><circle cx="7" cy="7" r="6.9" fill="#6a6a6a"/><circle cx="7" cy="7" r="5.6" fill="#4a4a4a"/><circle cx="7" cy="7" r="4.5" fill="#8c8c8c" stroke="#1c1c1c" stroke-width="1.3"/></svg>
<span class="t" style="left:927px;top:553px;color:#d0d0d0">Lado</span>
<svg style="left:956px;top:563px" width="90" height="1"><rect x="0" y="0" width="2" height="1" fill="#a8a8a8"/><rect x="6" y="0" width="2" height="1" fill="#a8a8a8"/><rect x="12" y="0" width="2" height="1" fill="#a8a8a8"/><rect x="18" y="0" width="2" height="1" fill="#a8a8a8"/><rect x="24" y="0" width="2" height="1" fill="#a8a8a8"/><rect x="30" y="0" width="2" height="1" fill="#a8a8a8"/><rect x="36" y="0" width="2" height="1" fill="#a8a8a8"/><rect x="42" y="0" width="2" height="1" fill="#a8a8a8"/><rect x="48" y="0" width="2" height="1" fill="#a8a8a8"/><rect x="54" y="0" width="2" height="1" fill="#a8a8a8"/><rect x="60" y="0" width="2" height="1" fill="#a8a8a8"/><rect x="66" y="0" width="2" height="1" fill="#a8a8a8"/><rect x="72" y="0" width="2" height="1" fill="#a8a8a8"/><rect x="78" y="0" width="2" height="1" fill="#a8a8a8"/><rect x="84" y="0" width="2" height="1" fill="#a8a8a8"/></svg>
<div style="left:1049px;top:551px;width:274px;height:16px;border-radius:4px 0 0 4px;background:linear-gradient(#767676,#5e5e5e);border:1px solid #363636;border-right:0"></div>
<span class="t" style="left:1056px;top:552px;color:#dcdcdc">Ambos</span>
<div style="left:907px;top:572px;width:416px;height:1px;background:#5c5c5c"></div>
<svg style="left:909px;top:578px;" width="14" height="14"><circle cx="7" cy="7" r="6.9" fill="#6a6a6a"/><circle cx="7" cy="7" r="5.6" fill="#4a4a4a"/><circle cx="7" cy="7" r="4.5" fill="#8c8c8c" stroke="#1c1c1c" stroke-width="1.3"/></svg>
<span class="t" style="left:927px;top:578px;color:#d0d0d0">Mezclar Texturas</span>
<svg style="left:1016px;top:588px" width="30" height="1"><rect x="0" y="0" width="2" height="1" fill="#a8a8a8"/><rect x="6" y="0" width="2" height="1" fill="#a8a8a8"/><rect x="12" y="0" width="2" height="1" fill="#a8a8a8"/><rect x="18" y="0" width="2" height="1" fill="#a8a8a8"/><rect x="24" y="0" width="2" height="1" fill="#a8a8a8"/></svg>
<div style="left:1049px;top:579px;width:12px;height:12px;border-radius:3px;background:linear-gradient(#707070,#555);border:1px solid #3a3a3a;"></div>
<svg style="left:909px;top:596px;" width="14" height="14"><circle cx="7" cy="7" r="6.9" fill="#6a6a6a"/><circle cx="7" cy="7" r="5.6" fill="#4a4a4a"/><circle cx="7" cy="7" r="4.5" fill="#8c8c8c" stroke="#1c1c1c" stroke-width="1.3"/></svg>
<span class="t" style="left:927px;top:596px;color:#d0d0d0">Repetición</span>
<svg style="left:986px;top:606px" width="60" height="1"><rect x="0" y="0" width="2" height="1" fill="#a8a8a8"/><rect x="6" y="0" width="2" height="1" fill="#a8a8a8"/><rect x="12" y="0" width="2" height="1" fill="#a8a8a8"/><rect x="18" y="0" width="2" height="1" fill="#a8a8a8"/><rect x="24" y="0" width="2" height="1" fill="#a8a8a8"/><rect x="30" y="0" width="2" height="1" fill="#a8a8a8"/><rect x="36" y="0" width="2" height="1" fill="#a8a8a8"/><rect x="42" y="0" width="2" height="1" fill="#a8a8a8"/><rect x="48" y="0" width="2" height="1" fill="#a8a8a8"/><rect x="54" y="0" width="2" height="1" fill="#a8a8a8"/></svg>
<div style="left:1049px;top:597px;width:12px;height:12px;border-radius:3px;background:#333;border:1px solid #3a3a3a;"></div>
<svg style="left:1050px;top:597px;" width="12" height="12"><path d="M1.5 6.5 L4 10 L10 1.5" fill="none" stroke="#f0f0f0" stroke-width="1.6"/></svg>
<svg style="left:909px;top:614px;" width="14" height="14"><circle cx="7" cy="7" r="6.9" fill="#6a6a6a"/><circle cx="7" cy="7" r="5.6" fill="#4a4a4a"/><circle cx="7" cy="7" r="4.5" fill="#8c8c8c" stroke="#1c1c1c" stroke-width="1.3"/></svg>
<span class="t" style="left:927px;top:614px;color:#d0d0d0">Sin Costuras</span>
<svg style="left:998px;top:624px" width="48" height="1"><rect x="0" y="0" width="2" height="1" fill="#a8a8a8"/><rect x="6" y="0" width="2" height="1" fill="#a8a8a8"/><rect x="12" y="0" width="2" height="1" fill="#a8a8a8"/><rect x="18" y="0" width="2" height="1" fill="#a8a8a8"/><rect x="24" y="0" width="2" height="1" fill="#a8a8a8"/><rect x="30" y="0" width="2" height="1" fill="#a8a8a8"/><rect x="36" y="0" width="2" height="1" fill="#a8a8a8"/><rect x="42" y="0" width="2" height="1" fill="#a8a8a8"/></svg>
<div style="left:1049px;top:615px;width:12px;height:12px;border-radius:3px;background:linear-gradient(#707070,#555);border:1px solid #3a3a3a;"></div>
<svg style="left:909px;top:632px;opacity:.4;" width="14" height="14"><circle cx="7" cy="7" r="6.9" fill="#6a6a6a"/><circle cx="7" cy="7" r="5.6" fill="#4a4a4a"/><circle cx="7" cy="7" r="4.5" fill="#8c8c8c" stroke="#1c1c1c" stroke-width="1.3"/></svg>
<span class="t" style="left:927px;top:632px;color:#7e7e7e;letter-spacing:-.2px">Usar UVW para Relieve</span>
<div style="left:1049px;top:633px;width:12px;height:12px;border-radius:3px;background:#333;border:1px solid #3a3a3a;opacity:.5;"></div>
<svg style="left:1050px;top:633px;opacity:.5;" width="12" height="12"><path d="M1.5 6.5 L4 10 L10 1.5" fill="none" stroke="#f0f0f0" stroke-width="1.6"/></svg>
<div style="left:907px;top:650px;width:416px;height:1px;background:#5c5c5c"></div>
<svg style="left:909px;top:658px;" width="14" height="14"><circle cx="7" cy="7" r="6.9" fill="#6a6a6a"/><circle cx="7" cy="7" r="5.6" fill="#4a4a4a"/><circle cx="7" cy="7" r="4.5" fill="#8c8c8c" stroke="#1c1c1c" stroke-width="1.3"/></svg>
<span class="t" style="left:927px;top:658px;color:#d0d0d0">Desfase U</span>
<svg style="left:980px;top:668px" width="30" height="1"><rect x="0" y="0" width="2" height="1" fill="#a8a8a8"/><rect x="6" y="0" width="2" height="1" fill="#a8a8a8"/><rect x="12" y="0" width="2" height="1" fill="#a8a8a8"/><rect x="18" y="0" width="2" height="1" fill="#a8a8a8"/><rect x="24" y="0" width="2" height="1" fill="#a8a8a8"/></svg>
<div style="left:1009px;top:656px;width:66px;height:17px;background:#333;border:1px solid #2a2a2a;border-bottom-color:#555;border-radius:2px"></div>
<span class="t" style="left:1016px;top:657.5px;color:#cfcfcf">0 %</span>
<svg style="left:1065px;top:659.0px" width="6" height="11" viewBox="0 0 6 11"><path d="M0 4.5 L3 0.5 L6 4.5Z M0 6.5 L3 10.5 L6 6.5Z" fill="#8a8a8a"/></svg>
<svg style="left:1078px;top:658px;" width="14" height="14"><circle cx="7" cy="7" r="6.9" fill="#6a6a6a"/><circle cx="7" cy="7" r="5.6" fill="#4a4a4a"/><circle cx="7" cy="7" r="4.5" fill="#8c8c8c" stroke="#1c1c1c" stroke-width="1.3"/></svg>
<span class="t" style="left:1096px;top:658px;color:#d0d0d0">Desfase V</span>
<svg style="left:1148px;top:668px" width="30" height="1"><rect x="0" y="0" width="2" height="1" fill="#a8a8a8"/><rect x="6" y="0" width="2" height="1" fill="#a8a8a8"/><rect x="12" y="0" width="2" height="1" fill="#a8a8a8"/><rect x="18" y="0" width="2" height="1" fill="#a8a8a8"/><rect x="24" y="0" width="2" height="1" fill="#a8a8a8"/></svg>
<div style="left:1177px;top:656px;width:66px;height:17px;background:#333;border:1px solid #2a2a2a;border-bottom-color:#555;border-radius:2px"></div>
<span class="t" style="left:1184px;top:657.5px;color:#cfcfcf">0 %</span>
<svg style="left:1233px;top:659.0px" width="6" height="11" viewBox="0 0 6 11"><path d="M0 4.5 L3 0.5 L6 4.5Z M0 6.5 L3 10.5 L6 6.5Z" fill="#8a8a8a"/></svg>
<svg style="left:909px;top:678px;" width="14" height="14"><circle cx="7" cy="7" r="6.9" fill="#6a6a6a"/><circle cx="7" cy="7" r="5.6" fill="#4a4a4a"/><circle cx="7" cy="7" r="4.5" fill="#8c8c8c" stroke="#1c1c1c" stroke-width="1.3"/></svg>
<span class="t" style="left:927px;top:678px;color:#d0d0d0">Longitud U</span>
<svg style="left:992px;top:688px" width="18" height="1"><rect x="0" y="0" width="2" height="1" fill="#a8a8a8"/><rect x="6" y="0" width="2" height="1" fill="#a8a8a8"/><rect x="12" y="0" width="2" height="1" fill="#a8a8a8"/></svg>
<div style="left:1009px;top:676px;width:66px;height:17px;background:#333;border:1px solid #2a2a2a;border-bottom-color:#555;border-radius:2px"></div>
<span class="t" style="left:1016px;top:677.5px;color:#cfcfcf">100 %</span>
<svg style="left:1065px;top:679.0px" width="6" height="11" viewBox="0 0 6 11"><path d="M0 4.5 L3 0.5 L6 4.5Z M0 6.5 L3 10.5 L6 6.5Z" fill="#8a8a8a"/></svg>
<svg style="left:1078px;top:678px;" width="14" height="14"><circle cx="7" cy="7" r="6.9" fill="#6a6a6a"/><circle cx="7" cy="7" r="5.6" fill="#4a4a4a"/><circle cx="7" cy="7" r="4.5" fill="#8c8c8c" stroke="#1c1c1c" stroke-width="1.3"/></svg>
<span class="t" style="left:1096px;top:678px;color:#d0d0d0">Longitud V</span>
<svg style="left:1154px;top:688px" width="24" height="1"><rect x="0" y="0" width="2" height="1" fill="#a8a8a8"/><rect x="6" y="0" width="2" height="1" fill="#a8a8a8"/><rect x="12" y="0" width="2" height="1" fill="#a8a8a8"/><rect x="18" y="0" width="2" height="1" fill="#a8a8a8"/></svg>
<div style="left:1177px;top:676px;width:66px;height:17px;background:#333;border:1px solid #2a2a2a;border-bottom-color:#555;border-radius:2px"></div>
<span class="t" style="left:1184px;top:677.5px;color:#cfcfcf">100 %</span>
<svg style="left:1233px;top:679.0px" width="6" height="11" viewBox="0 0 6 11"><path d="M0 4.5 L3 0.5 L6 4.5Z M0 6.5 L3 10.5 L6 6.5Z" fill="#8a8a8a"/></svg>
<svg style="left:909px;top:698px;" width="14" height="14"><circle cx="7" cy="7" r="6.9" fill="#6a6a6a"/><circle cx="7" cy="7" r="5.6" fill="#4a4a4a"/><circle cx="7" cy="7" r="4.5" fill="#8c8c8c" stroke="#1c1c1c" stroke-width="1.3"/></svg>
<span class="t" style="left:927px;top:698px;color:#d0d0d0">Repeticiones U</span>
<div style="left:1009px;top:696px;width:66px;height:17px;background:#333;border:1px solid #2a2a2a;border-bottom-color:#555;border-radius:2px"></div>
<span class="t" style="left:1016px;top:697.5px;color:#cfcfcf">1</span>
<svg style="left:1065px;top:699.0px" width="6" height="11" viewBox="0 0 6 11"><path d="M0 4.5 L3 0.5 L6 4.5Z M0 6.5 L3 10.5 L6 6.5Z" fill="#8a8a8a"/></svg>
<svg style="left:1078px;top:698px;" width="14" height="14"><circle cx="7" cy="7" r="6.9" fill="#6a6a6a"/><circle cx="7" cy="7" r="5.6" fill="#4a4a4a"/><circle cx="7" cy="7" r="4.5" fill="#8c8c8c" stroke="#1c1c1c" stroke-width="1.3"/></svg>
<span class="t" style="left:1096px;top:698px;color:#d0d0d0">Repeticiones V</span>
<div style="left:1177px;top:696px;width:66px;height:17px;background:#333;border:1px solid #2a2a2a;border-bottom-color:#555;border-radius:2px"></div>
<span class="t" style="left:1184px;top:697.5px;color:#cfcfcf">1</span>
<svg style="left:1233px;top:699.0px" width="6" height="11" viewBox="0 0 6 11"><path d="M0 4.5 L3 0.5 L6 4.5Z M0 6.5 L3 10.5 L6 6.5Z" fill="#8a8a8a"/></svg>
<svg style="left:909px;top:718px;" width="14" height="14"><circle cx="7" cy="7" r="6.9" fill="#6a6a6a"/><circle cx="7" cy="7" r="5.6" fill="#4a4a4a"/><circle cx="7" cy="7" r="4.5" fill="#8c8c8c" stroke="#1c1c1c" stroke-width="1.3"/></svg>
<span class="t" style="left:927px;top:718px;color:#d0d0d0">Repeticiones U</span>
<div style="left:1009px;top:716px;width:66px;height:17px;background:#333;border:1px solid #2a2a2a;border-bottom-color:#555;border-radius:2px"></div>
<span class="t" style="left:1016px;top:717.5px;color:#cfcfcf">0</span>
<svg style="left:1065px;top:719.0px" width="6" height="11" viewBox="0 0 6 11"><path d="M0 4.5 L3 0.5 L6 4.5Z M0 6.5 L3 10.5 L6 6.5Z" fill="#8a8a8a"/></svg>
<svg style="left:1078px;top:718px;" width="14" height="14"><circle cx="7" cy="7" r="6.9" fill="#6a6a6a"/><circle cx="7" cy="7" r="5.6" fill="#4a4a4a"/><circle cx="7" cy="7" r="4.5" fill="#8c8c8c" stroke="#1c1c1c" stroke-width="1.3"/></svg>
<span class="t" style="left:1096px;top:718px;color:#d0d0d0">Repeticiones V</span>
<div style="left:1177px;top:716px;width:66px;height:17px;background:#333;border:1px solid #2a2a2a;border-bottom-color:#555;border-radius:2px"></div>
<span class="t" style="left:1184px;top:717.5px;color:#cfcfcf">0</span>
<svg style="left:1233px;top:719.0px" width="6" height="11" viewBox="0 0 6 11"><path d="M0 4.5 L3 0.5 L6 4.5Z M0 6.5 L3 10.5 L6 6.5Z" fill="#8a8a8a"/></svg>
<div style="left:0px;top:766px;width:1323px;height:2px;background:#7a7a7a"></div></body></html>
